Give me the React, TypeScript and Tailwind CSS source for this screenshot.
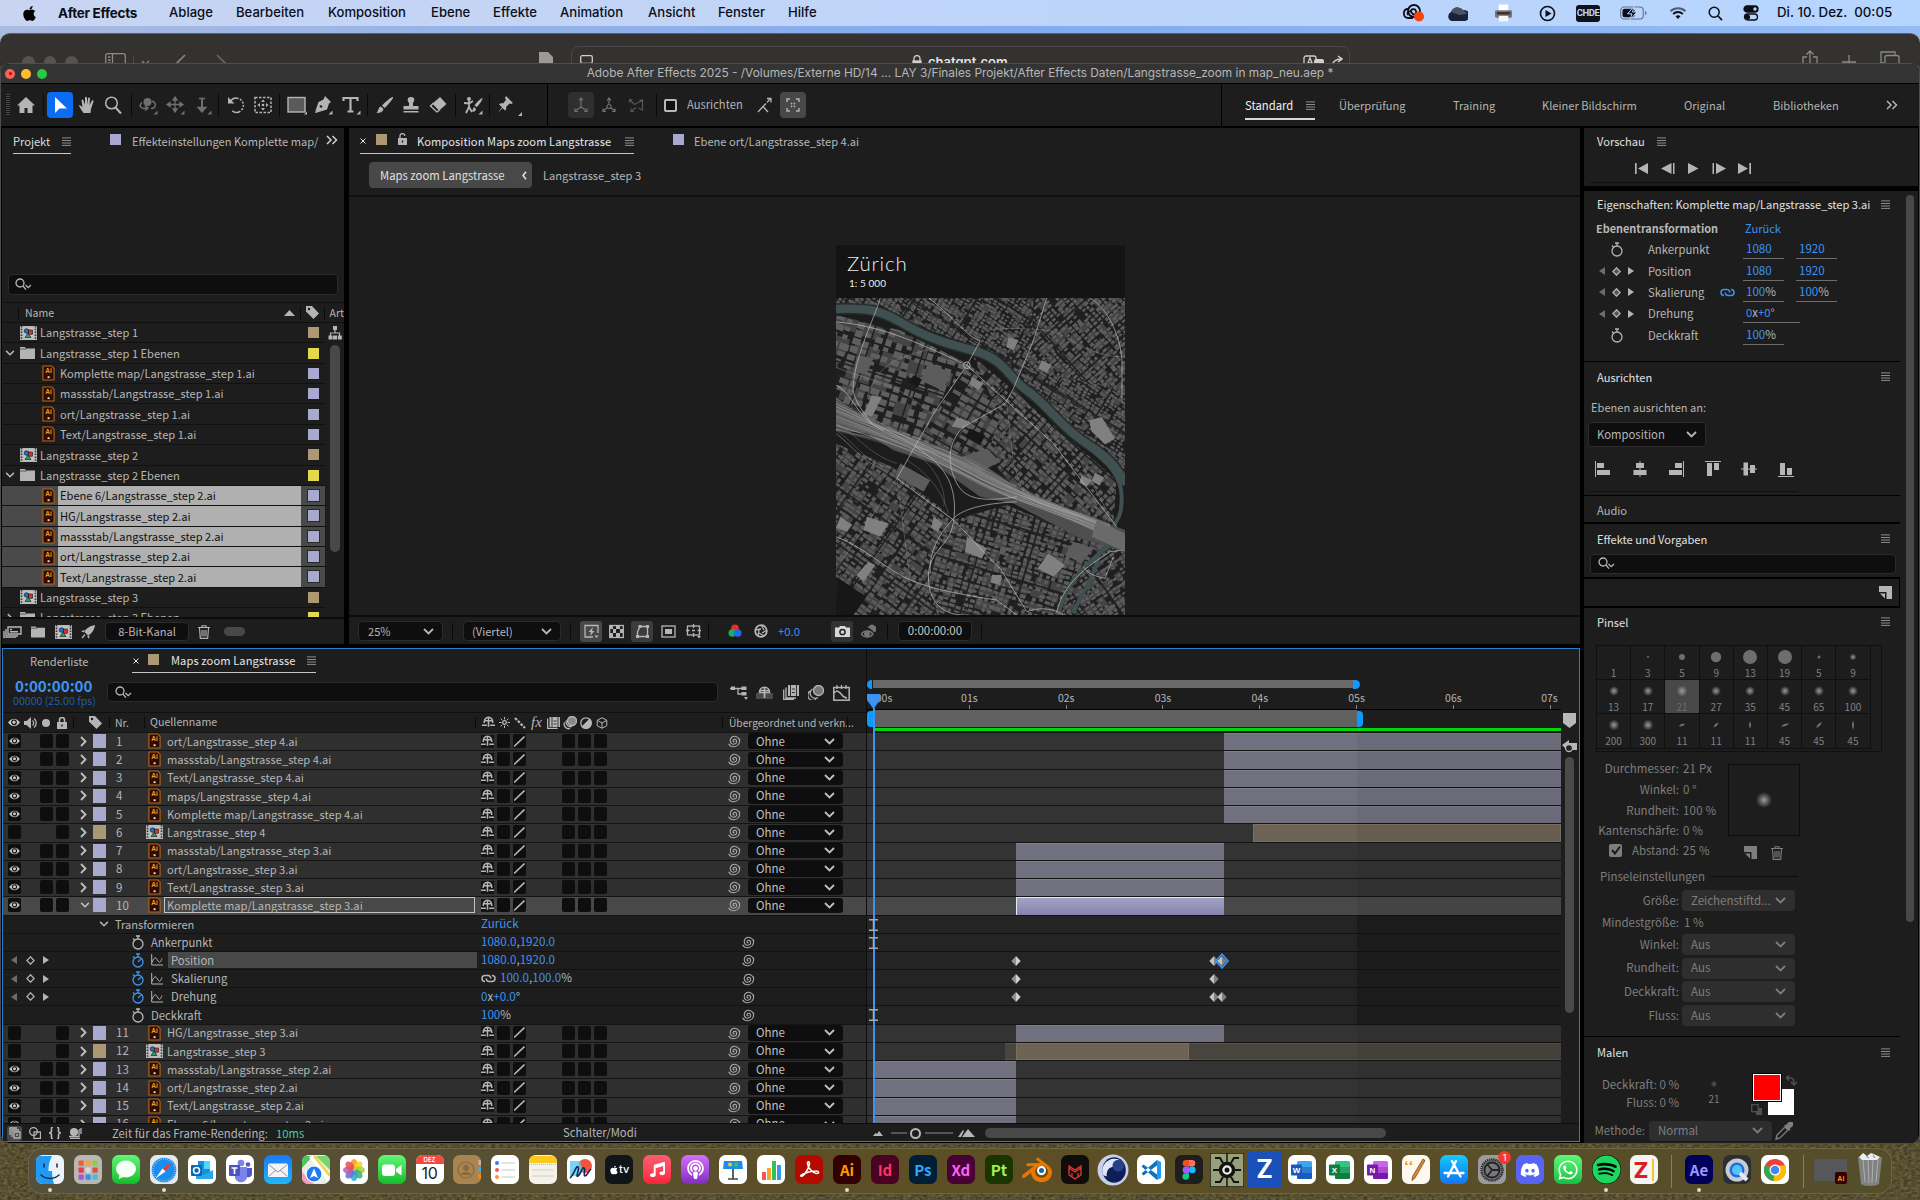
import type { ReactNode } from 'react';
import { FaApple, FaDiscord, FaMusic, FaPodcast, FaSpotify, FaWhatsapp } from 'react-icons/fa';
import { SiBlender } from 'react-icons/si';

interface IcoProps {
  children: ReactNode;
  className?: string;
  box?: string;
}

// Shared svg wrapper, everything is drawn with currentColor
const Ico = ({ children, className = 'size-4', box = '0 0 16 16' }: IcoProps) => (
  <svg viewBox={box} className={`shrink-0 ${className}`} fill="none" stroke="currentColor" strokeWidth="1.3">
    {children}
  </svg>
);

const Menu = ({ className = '' }: { className?: string }) => (
  <Ico className={`h-[9px] w-[9px] ${className}`} box="0 0 9 9">
    <path d="M0 .9h9M0 3.5h9M0 6h9M0 8.4h9" strokeWidth=".9" />
  </Ico>
);

const Chevron = ({ className = 'h-[7px] w-[11px]' }: { className?: string }) => (
  <Ico className={className} box="0 0 11 7">
    <path d="M1 1l4.5 4.5L10 1" strokeWidth="1.8" />
  </Ico>
);

const DoubleArrow = ({ className = '' }: { className?: string }) => (
  <Ico className={`h-[10px] w-[12px] ${className}`} box="0 0 12 10">
    <path d="M1 1l4 4-4 4M6.5 1l4 4-4 4" strokeWidth="1.5" />
  </Ico>
);

const SearchIcon = () => (
  <Ico className="h-[13px] w-[17px]" box="0 0 17 13">
    <circle cx="5" cy="5" r="4" />
    <path d="M8 8l3 3.6M10.500 7l2.700 2.700L16 7" />
  </Ico>
);

const Swatch = ({ className }: { className: string }) => <div className={`size-[11px] shrink-0 ${className}`} />;

const AiFile = () => (
  <svg viewBox="0 0 14 17" className="h-[16px] w-[13px] shrink-0">
    <path d="M1 1h9.500l2.500 2.500V16H1z" fill="#300b02" stroke="#b5651b" strokeWidth="1.200" />
    <text x="7" y="9" textAnchor="middle" className="font-['Liberation_Sans'] text-[7px] font-bold" fill="#ff9a1a">Ai</text>
    <rect x="6" y="12" width="2.200" height="2" fill="#ddd" />
  </svg>
);

const CompFile = () => (
  <svg viewBox="0 0 17 14" className="h-[14px] w-[17px] shrink-0">
    <rect width="17" height="14" fill="#b9b9b9" />
    <path d="M1.500 0v14M15.500 0v14" stroke="#333" strokeWidth="1.500" strokeDasharray="1.500 1.300" />
    <rect x="3.500" y="1.500" width="10" height="11" fill="#c4c4c4" />
    <circle cx="6.500" cy="5" r="2.300" fill="#1b6fd0" stroke="#111" strokeWidth=".6" />
    <rect x="8.500" y="4" width="4" height="4.200" fill="#d8322a" stroke="#111" strokeWidth=".6" />
    <path d="M8 7l3 4.500H5z" fill="#22a05a" stroke="#111" strokeWidth=".6" />
  </svg>
);

const Folder = ({ className = 'h-[12px] w-[15px]' }: { className?: string }) => (
  <svg viewBox="0 0 15 12" className={`shrink-0 ${className}`}>
    <path d="M0 0h5l1 1.500h9V12H0z" fill="#b4b4b4" />
    <path d="M0 2h6.500" stroke="#333" strokeWidth=".7" />
  </svg>
);

const Tag = ({ className = '' }: { className?: string }) => (
  <svg viewBox="0 0 13 13" className={`size-[13px] shrink-0 ${className}`}>
    <path d="M0 0h6l7 7.500L7.500 13 0 5.500z" fill="#b4b4b4" />
    <circle cx="3" cy="3" r="1.200" fill="#1d1d1d" />
  </svg>
);

const Trash = () => (
  <Ico className="h-[14px] w-[12px]" box="0 0 12 14">
    <path d="M0 2.500h12M4 2V.8h4V2M1.500 3l.8 10.400h7.400L10.500 3M4 5v6.500M6 5v6.500M8 5v6.500" strokeWidth="1.100" />
  </Ico>
);

const Stopwatch = ({ active = false }: { active?: boolean }) => (
  <Ico className={`h-[15px] w-[14px] ${active ? 'text-[#3b94f2]' : 'text-[#b4b4b4]'}`} box="0 0 14 15">
    <circle cx="7" cy="9" r="5" />
    <path d="M5 1h4M7 1v3M2 3.500l1.500 1.500" />
    {active && <path d="M7 9l3-3" />}
  </Ico>
);

const Whip = () => (
  <Ico className="size-[14px] text-[#a8a8a8]" box="0 0 14 14">
    <path d="M7.500 7.500c-.9.900-2-.2-1.300-1.400 1-1.600 3.500-.8 3.500 1.300 0 2.300-2.500 3.400-4.500 2.500C2.500 8.600 2.700 5 4.800 3.300 7.500 1.200 12 2.600 12.600 6.500M12.600 4.500v2.600c-.2 3-2.600 5.400-5.600 5.600-2.400.1-4.400-1-5.400-3" strokeWidth="1.100" />
  </Ico>
);

const Link = ({ className = '' }: { className?: string }) => (
  <Ico className={`h-[9px] w-[15px] ${className}`} box="0 0 15 9">
    <path d="M4 7.500a3 3 0 010-6h3a2.600 2.600 0 012.600 3.200M11 1.500a3 3 0 010 6H8a2.600 2.600 0 01-2.600-3.200" strokeWidth="1.500" />
  </Ico>
);

const KeyNav = ({ wide = false }: { wide?: boolean }) => (
  <div className={`flex items-center text-[#b4b4b4] ${wide ? 'gap-[8.500px]' : 'gap-[7px]'}`}>
    <Ico className="h-[8px] w-[6px] text-[#6c6c6c]" box="0 0 6 8"><path d="M6 0v8L0 4z" fill="currentColor" stroke="none" /></Ico>
    <Ico className="size-[9px]" box="0 0 9 9"><path d="M4.500.8l3.700 3.700-3.700 3.700L.8 4.500z" fill={wide ? 'none' : '#555'} /></Ico>
    <Ico className="h-[8px] w-[6px]" box="0 0 6 8"><path d="M0 0v8l6-4z" fill="currentColor" stroke="none" /></Ico>
  </div>
);

/* ---------- Menu bar ---------- */

const menus: [string, string][] = [
  ['Ablage', 'w-[67px]'],
  ['Bearbeiten', 'w-[92px]'],
  ['Komposition', 'w-[103px]'],
  ['Ebene', 'w-[62px]'],
  ['Effekte', 'w-[67px]'],
  ['Animation', 'w-[88px]'],
  ['Ansicht', 'w-[70px]'],
  ['Fenster', 'w-[70px]'],
  ['Hilfe', 'w-[40px]'],
];

const MenuBar = () => (
  <div className="flex h-[26px] items-center bg-linear-to-r from-[#c8d4f2] to-[#b5d5ff] font-['Inter',sans-serif] text-[13.100px] text-[#0b0e16]">
    <FaApple className="ml-[21px] size-[17px] text-black" />
    <span className="ml-[20px] w-[111px] shrink-0 text-[13.500px] font-bold tracking-[-0.300px]">After Effects</span>
    {menus.map(([label, width]) => (
      <span key={label} className={`${width} shrink-0 font-medium`}>{label}</span>
    ))}
    <div className="ml-auto flex items-center pr-[17px]">
      <div className="flex w-[44px] justify-center">
        <Ico className="h-[18px] w-[23px]" box="0 0 23 18">
          <circle cx="12" cy="7" r="6" strokeWidth="1.800" />
          <path d="M6 5C1 5 0 13 6 14h5M6 11c-2-3 2-5 4-2s5 1 4-2-6-2-5 1" strokeWidth="1.800" />
          <circle cx="17" cy="12.500" r="5" fill="#f4430d" stroke="none" />
        </Ico>
      </div>
      <div className="flex w-[44px] justify-center">
        <svg viewBox="0 0 22 15" className="h-[15px] w-[22px]">
          <path d="M5 15a5 5 0 010-9 7 7 0 0112-2 5.500 5.500 0 012 11z" fill="#18233a" />
          <path d="M7 3a7 7 0 0110 1 6 6 0 014 4l-8 1-8-3z" fill="#4a5263" />
        </svg>
      </div>
      <div className="flex w-[49px] justify-center">
        <svg viewBox="0 0 18 18" className="h-[18px] w-[17px]">
          <path d="M4 0h10v7H4z" fill="#fff" />
          <rect x="0" y="6" width="18" height="8" rx="1.500" fill="#7a736e" />
          <path d="M2 8h14v2.500H2z" fill="#35302d" />
          <path d="M4 12h10v6H4z" fill="#f5f5f5" />
        </svg>
      </div>
      <div className="flex w-[38px] justify-center">
        <Ico className="size-[17px]" box="0 0 17 17"><circle cx="8.500" cy="8.500" r="7" strokeWidth="1.600" /><path d="M6.500 5v7l6-3.500z" fill="currentColor" stroke="none" /></Ico>
      </div>
      <div className="ml-[10px] flex h-[17px] w-[24px] items-center justify-center rounded-[3px] bg-[#0d131c] font-['Roboto',sans-serif] text-[9.500px] font-bold tracking-tighter text-[#bcd8ff]">CHDE</div>
      <div className="ml-[20px] flex w-[28px]">
        <Ico className="h-[14px] w-[28px]" box="0 0 28 14">
          <rect x=".7" y="1" width="22.600" height="12" rx="3.500" strokeWidth="1.100" className="opacity-50" />
          <path d="M25 5v4c2-.5 2-3.500 0-4z" fill="currentColor" stroke="none" className="opacity-50" />
          <rect x="2.500" y="2.800" width="12" height="8.400" rx="2" fill="currentColor" stroke="none" />
          <path d="M14 .5L7.500 7.800H12L10 13.500 17 6h-4.500z" fill="currentColor" stroke="#b8d7fe" strokeWidth="1" />
        </Ico>
      </div>
      <Ico className="ml-[21px] h-[14px] w-[18px]" box="0 0 18 14">
        <path d="M1.500 5.200a11 11 0 0115 0" strokeWidth="2" className="opacity-60" />
        <path d="M4.200 8a7 7 0 019.600 0" strokeWidth="2" />
        <path d="M6.500 10.200a4 4 0 015 0L9 13z" fill="currentColor" stroke="none" />
      </Ico>
      <Ico className="ml-[21px] size-[15px]" box="0 0 15 15"><circle cx="6.200" cy="6.200" r="5" strokeWidth="1.500" /><path d="M10 10l4 4.200" strokeWidth="1.700" /></Ico>
      <Ico className="ml-[20px] h-[16px] w-[16px]" box="0 0 16 16">
        <rect x="1" y="1" width="14" height="6" rx="3" fill="currentColor" /><circle cx="12" cy="4" r="1.700" fill="#b8d7fe" stroke="none" />
        <rect x="1.500" y="9" width="13" height="6" rx="3" /><circle cx="4.500" cy="12" r="2.600" fill="currentColor" stroke="none" />
      </Ico>
      <span className="ml-[18px] w-[126px] text-[13.300px] font-medium whitespace-pre">Di. 10. Dez.  00:05</span>
    </div>
  </div>
);

/* ---------- Browser window that peeks out behind ---------- */

const BrowserStrip = () => (
  <div className="flex h-[33px] overflow-hidden rounded-t-[10px] border-t border-[#5e605f] bg-[#333230] text-[#8b8a88]">
    <div className="flex w-[571px] items-start pt-[22px]">
      <div className="ml-[22px] flex gap-[9px]">
        <div className="size-[12.500px] rounded-full bg-[#555452]" />
        <div className="size-[12.500px] rounded-full bg-[#555452]" />
        <div className="size-[12.500px] rounded-full bg-[#555452]" />
      </div>
      <Ico className="-mt-[3px] ml-[27px] h-[16px] w-[21px]" box="0 0 21 16"><rect x=".7" y=".7" width="19.600" height="14.600" rx="2" /><path d="M7.500 1v14M3 4h2.500M3 7h2.500M3 10h2.500" /></Ico>
      <div className="ml-[7px] h-3 w-px bg-[#4c4b49]" />
      <Ico className="mt-[4px] ml-[7px] h-[6px] w-[9px]" box="0 0 9 6"><path d="M1 1l3.500 3.500L8 1" /></Ico>
      <Ico className="-mt-[2px] ml-[26px] h-[18px] w-[11px]" box="0 0 11 18"><path d="M9 1L1 9l8 8" strokeWidth="1.600" /></Ico>
      <Ico className="-mt-[2px] ml-[28px] h-[18px] w-[11px] opacity-60" box="0 0 11 18"><path d="M2 1l8 8-8 8" strokeWidth="1.600" /></Ico>
      <Ico className="-mt-[4px] ml-[312px] h-[16px] w-[16px]" box="0 0 16 16"><path d="M1 0h9l5 5v11H1z" fill="#9b9a98" stroke="none" /></Ico>
    </div>
    <div className="mt-[12px] flex h-[30px] w-[779px] items-start rounded-[8px] border border-[#4a4947] pt-[8px] text-[#d0cfcd]">
      <Ico className="ml-[8px] h-[12px] w-[13px]" box="0 0 13 12"><rect x=".7" y=".7" width="11.600" height="7.600" rx="1.500" /></Ico>
      <Ico className="ml-[319px] h-[12px] w-[10px]" box="0 0 10 12"><path d="M2 6V3.500a3 3 0 016 0V6" /><rect x="1" y="6" width="8" height="6" fill="currentColor" /></Ico>
      <span className="ml-[6px] w-[90px] font-['Inter',sans-serif] text-[13px] leading-[15px] font-semibold text-[#e4e3e1]">chatgpt.com</span>
      <Ico className="ml-[285px] h-[12px] w-[22px]" box="0 0 22 12"><rect x="1" y="1" width="12" height="11" rx="2" /><path d="M4 10l3-7 3 7M5 8h4" /><rect x="11" y="4" width="10" height="8" rx="2" fill="currentColor" stroke="none" /></Ico>
      <Ico className="ml-[6px] h-[12px] w-[12px]" box="0 0 12 12"><path d="M1 11c1-5 4-7 9-7M7 1l4 3-4 3" strokeWidth="1.500" /></Ico>
    </div>
    <div className="ml-auto flex items-start pr-[19px]">
      <Ico className="mt-[16px] h-[18px] w-[18px]" box="0 0 18 18"><path d="M6 7H2v11h14V7h-4M9 14V1M5.500 4.500L9 1l3.500 3.500" /></Ico>
      <Ico className="mt-[20px] ml-[22px] h-[16px] w-[16px]"><path d="M8 1v14M1 8h14" /></Ico>
      <Ico className="mt-[17px] ml-[23px] h-[18px] w-[21px]" box="0 0 21 18"><path d="M4 12H1V1h14v3" /><rect x="5" y="4.500" width="14" height="13" rx="2" /></Ico>
    </div>
  </div>
);

/* ---------- Tool bar ---------- */

const Corner = () => <path d="M18.500 18.500h-4l4-4z" fill="currentColor" stroke="none" />;

const Tool = ({ children, className = '' }: { children: ReactNode; className?: string }) => (
  <div className={`flex h-[26px] w-[26px] shrink-0 items-center justify-center rounded-[4px] ${className}`}>
    <Ico className="size-[20px]" box="-1 -1 20 20">{children}</Ico>
  </div>
);

const Sep = ({ className = 'h-[22px]' }: { className?: string }) => <div className={`w-px shrink-0 bg-[#0a0a0a] ${className}`} />;

const ToolBar = () => (
  <div className="flex h-[43px] shrink-0 items-center border-t border-black bg-[#1d1d1d] text-[#b4b4b4]">
    <div className="ml-[5px] h-[22px] w-[4px] shrink-0 bg-[repeating-linear-gradient(#4a4a4a_0_1px,#161616_1px_2px)]" />
    <Tool className="ml-[3px]"><path d="M9 1L0 9.500h2.500V17h5v-5h3v5h5V9.500H18z" fill="currentColor" stroke="none" /></Tool>
    <Sep className="ml-[4px] h-[22px]" />
    <Tool className="ml-[3px] bg-[#0a6cf1] text-white"><path d="M4 1v16l4.500-4.500H16z" fill="currentColor" stroke="none" /></Tool>
    <Tool className="ml-px">
      <path d="M5.500 17c-1-2-3.500-4.500-4.500-7.500.8-.8 2 0 3.500 2L3.500 4c.8-1 1.700-.6 2 .5L7 9V1.500c.7-1 1.700-.8 2 .3V8.500l1.200-6.500c.8-.8 1.800-.5 1.800.7L11.500 9l2.500-4.500c.9-.6 1.800 0 1.500 1L13 13l-.5 4z" fill="currentColor" stroke="none" />
    </Tool>
    <Tool><circle cx="7.500" cy="7" r="5.800" strokeWidth="1.500" /><path d="M11.500 11.500L17 17.500" strokeWidth="2" /></Tool>
    <Sep className="ml-[5px] h-[22px]" />
    <Tool className="ml-[3px] text-[#6f6f6f]"><path d="M3 6.500C-1 10 2 13.500 8 12M13 5c5 2 4 7-1 7.500M6 10l3 2-3 2.500" strokeWidth="1.500" /><circle cx="8.500" cy="6" r="4" fill="currentColor" stroke="none" /><Corner /></Tool>
    <Tool className="ml-px text-[#6f6f6f]"><path d="M9 2v13M2 8.500h14M9 1L7 4h4zM9 16l-2-3h4zM1 8.500l3-2v4zM17 8.500l-3-2v4z" fill="currentColor" /><Corner /></Tool>
    <Tool className="ml-px text-[#6f6f6f]"><path d="M9 3v11" strokeWidth="2" /><path d="M6 2.500h6M9 16l-4-4.500h8z" fill="currentColor" /><Corner /></Tool>
    <Sep className="ml-[3px] h-[22px]" />
    <Tool className="ml-[4px]"><path d="M3.500 5C6 1.500 11 1 14 4s3.500 7 0 10.500-8 2-9.500-.5" strokeWidth="1.500" strokeDasharray="9 1.500 2 1.500 2 1.500 2 1.500 2 1.500" /><path d="M1 1v6.500h6.500z" fill="currentColor" stroke="none" /></Tool>
    <Tool className="ml-px"><rect x="1" y="1.500" width="16" height="15" strokeDasharray="2.500 1.500" strokeWidth="1.500" /><path d="M9 3.500L7 6h4zM9 14.500L7 12h4zM3.500 9L6 7v4zM14.500 9L12 7v4z" fill="currentColor" stroke="none" /><circle cx="9" cy="9" r="1.300" fill="currentColor" stroke="none" /></Tool>
    <Sep className="ml-[3px] h-[22px]" />
    <Tool className="ml-[4px]"><rect x="0" y="1.500" width="17" height="14.500" fill="#5a5a5a" strokeWidth="1.400" /><path d="M19 18.500h-3l3-3z" fill="currentColor" stroke="none" /></Tool>
    <Tool><path d="M11 0l6 6-2 1.500-2 6L1.500 17l-.5-.5 5-5.500 1.500 1 1-1.500-1.500-1.500-1.500 1 .5 1.500L1 16 4.500 6 9.500 3.500z" fill="currentColor" stroke="none" /><Corner /></Tool>
    <Tool className="ml-[2px]"><path d="M1.500 5V2h14v3M8.500 2v13.500M5.500 15.500h6" strokeWidth="2.200" /><Corner /></Tool>
    <Sep className="ml-[3px] h-[22px]" />
    <Tool className="ml-[4px]"><path d="M17 1c1 1-6 9.500-8.500 11L6 9.500C8 7 16 0 17 1zM5 10.500l2.500 2.500c-.5 3-3.500 4-7 4 2-1.500 1.500-6 4.500-6.500z" fill="currentColor" stroke="none" /></Tool>
    <Tool><path d="M9 1c4 0 4 3.500 2 6v3h5.500v3.500h-15V10H7V7C5 4.500 5 1 9 1zM1.500 15h15v1.600h-15z" fill="currentColor" stroke="none" /></Tool>
    <Tool className="ml-px"><path d="M11 1l6.500 7-9.500 8.500L.8 10z" fill="currentColor" stroke="none" /><path d="M4 7.500l6.500 6.500-2.500 2L1.500 10z" fill="#1d1d1d" stroke="currentColor" /></Tool>
    <Sep className="ml-[4px] h-[22px]" />
    <Tool className="ml-[4px]"><circle cx="5" cy="3" r="2" fill="currentColor" stroke="none" /><path d="M5 5v6L2 17M5 11l3 5M0 7l5 .5L9 5" strokeWidth="1.800" /><path d="M18.500 2c0 2-4 8-6 9l-2-1.500C12 7 17 2 18.500 2zM10 11l2 2c0 2-2 3-4 2.500 1-1 .5-3 2-4.500z" fill="currentColor" stroke="none" /><Corner /></Tool>
    <Sep className="ml-[3px] h-[22px]" />
    <Tool className="ml-[2px]"><path d="M10 0l7 7-2 1-1.500-.5L10 11c.5 2 0 3-1 3.500L6.500 12 2 17 6 11 3 8.500C4 7.500 5.500 7 7 7.500L10 4 9 2z" fill="currentColor" stroke="none" /></Tool>
    <svg viewBox="0 0 4 4" className="mt-[17px] size-[4px] shrink-0"><path d="M4 4H0l4-4z" fill="#b4b4b4" /></svg>
    <div className="ml-[25px] h-full w-px shrink-0 bg-black" />
    <Tool className="ml-[20px] bg-[#2f2f2f] text-[#707070]"><path d="M9 3v8M9 11l-6 4M9 11l6 4M7 4.500L9 2l2 2.500M3 12.500V15.500h3M15 12.500V15.500h-3" strokeWidth="1.200" /></Tool>
    <Tool className="ml-[2px] text-[#707070]"><path d="M9 2v6M7 12l-4 3M11 12l4 3M7 4.500L9 2l2 2.500M3 12.500V15.500h3M15 12.500V15.500h-3" strokeWidth="1.200" /><circle cx="9" cy="10.500" r="2" strokeWidth="1.200" /></Tool>
    <Tool className="ml-px text-[#555]"><path d="M2.500 3.500l5 5M7.500 8.500L15.500 4v10l-4-2M4 15.500l5-4M2.500 6.500v-3h3M4 12.500v3h3M15.500 7V4h-3" strokeWidth="1.200" /></Tool>
    <Sep className="ml-[7px] h-[22px]" />
    <div className="ml-[7px] size-[13px] shrink-0 rounded-[2px] border-2 border-[#b8b8b8] bg-[#111]" />
    <span className="ml-[10px] w-[57px] shrink-0 pb-px text-[11.200px]">Ausrichten</span>
    <Tool className="ml-[7px]"><path d="M3 16l5-5.500 5 5.500M8 10.500l3-3M12 6.500L15 3M12 2.500h4v4" strokeWidth="1.300" /></Tool>
    <Tool className="ml-[3px] bg-[#484848]"><path d="M3 6V3h3M12 3h3v3M15 12v3h-3M6 15H3v-3M7 7l1.200 1.200M11 7L9.800 8.200M7 11l1.200-1.200M11 11L9.800 9.800" strokeWidth="1.400" /></Tool>
    <div className="ml-auto flex h-full w-[698px] shrink-0 items-center border-l border-black text-[11.100px]">
      <div className="mt-[4px] ml-[23px] flex h-[25px] w-[70px] shrink-0 items-center justify-between border-b-2 border-[#d8d8d8] pb-[2px] text-[11.300px] text-[#f0f0f0]">
        Standard <Menu className="text-[#9a9a9a]" />
      </div>
      <div className="mt-px flex items-center">
        <span className="ml-[24px] w-[114px]">Überprüfung</span>
        <span className="w-[89px]">Training</span>
        <span className="w-[142px]">Kleiner Bildschirm</span>
        <span className="w-[89px]">Original</span>
        <span className="w-[113px]">Bibliotheken</span>
      </div>
      <DoubleArrow className="mb-px" />
    </div>
  </div>
);

/* ---------- Project panel ---------- */

interface ProjectItem {
  name: string;
  kind: 'comp' | 'folder' | 'ai';
  selected?: boolean;
  closed?: boolean;
}

const projectItems: ProjectItem[] = [
  { name: 'Langstrasse_step 1', kind: 'comp' },
  { name: 'Langstrasse_step 1 Ebenen', kind: 'folder' },
  { name: 'Komplette map/Langstrasse_step 1.ai', kind: 'ai' },
  { name: 'massstab/Langstrasse_step 1.ai', kind: 'ai' },
  { name: 'ort/Langstrasse_step 1.ai', kind: 'ai' },
  { name: 'Text/Langstrasse_step 1.ai', kind: 'ai' },
  { name: 'Langstrasse_step 2', kind: 'comp' },
  { name: 'Langstrasse_step 2 Ebenen', kind: 'folder' },
  { name: 'Ebene 6/Langstrasse_step 2.ai', kind: 'ai', selected: true },
  { name: 'HG/Langstrasse_step 2.ai', kind: 'ai', selected: true },
  { name: 'massstab/Langstrasse_step 2.ai', kind: 'ai', selected: true },
  { name: 'ort/Langstrasse_step 2.ai', kind: 'ai', selected: true },
  { name: 'Text/Langstrasse_step 2.ai', kind: 'ai', selected: true },
  { name: 'Langstrasse_step 3', kind: 'comp' },
  { name: 'Langstrasse_step 3 Ebenen', kind: 'folder', closed: true },
];

const kindColor = { comp: 'bg-[#ac9873]', folder: 'bg-[#e4d84c]', ai: 'bg-[#a9a8cf]' };

const ProjectRow = ({ item }: { item: ProjectItem }) => (
  <div className={`flex h-[20.360px] w-[323px] shrink-0 items-center border-b border-[#111] ${item.selected ? 'bg-[#4a4a4a]' : ''}`}>
    {item.kind === 'ai' ? (
      <div className="flex w-[56px] justify-end pr-[3px]"><AiFile /></div>
    ) : (
      <div className="flex w-[36px] items-center">
        <div className="flex w-[18px] justify-center pr-[3px]">
          {item.kind === 'folder' && <Chevron className={item.closed ? 'h-[6px] w-[10px] -rotate-90' : 'h-[6px] w-[10px]'} />}
        </div>
        {item.kind === 'folder' ? <Folder /> : <CompFile />}
      </div>
    )}
    <div className={`flex h-full items-center pl-[2px] ${item.kind === 'ai' ? 'w-[243px]' : 'w-[263px]'} ${item.selected ? 'bg-[#b0b0b0] text-[#111]' : ''}`}>
      {item.name}
    </div>
    <Swatch className={`ml-[7px] ${kindColor[item.kind]} ${item.selected ? 'outline outline-[#2a2a2a]' : ''}`} />
  </div>
);

const ProjectPanel = () => (
  <div className="flex w-[342px] flex-col overflow-hidden bg-[#1d1d1d]">
    <div className="flex h-[26px] shrink-0 items-end pl-[11px]">
      <div className="flex h-[24px] w-[58px] shrink-0 items-center justify-between border-b-[1.500px] border-[#c8c8c8] pb-[1px] text-[#dcdcdc]">
        Projekt <Menu className="text-[#9a9a9a]" />
      </div>
      <Swatch className="mb-[9px] ml-[39px] bg-[#a9a8cf]" />
      <div className="ml-[11px] flex h-[24px] w-[187px] shrink-0 items-center overflow-hidden pb-[1px] whitespace-nowrap">Effekteinstellungen Komplette map/</div>
      <DoubleArrow className="mb-[9px] ml-[7px] text-[#d0d0d0]" />
    </div>
    <div className="mt-[120px] ml-[6px] flex h-[21px] w-[330px] shrink-0 items-center rounded-[4px] border border-[#2b2b2b] bg-[#0e0e0e] pl-[6px]"><SearchIcon /></div>
    <div className="mt-[7px] flex h-[21px] shrink-0 items-center border-y border-[#101010] text-[10.500px]">
      <Sep className="ml-[16px] h-3" />
      <span className="ml-[6px] w-[260px]">Name</span>
      <svg viewBox="0 0 13 7" className="h-[6px] w-[13px] shrink-0"><path d="M6.500 0L13 7H0z" fill="#b4b4b4" /></svg>
      <Sep className="ml-[4px] h-3" />
      <Tag className="ml-[5px]" />
      <Sep className="ml-[5px] h-3" />
      <span className="ml-[5px]">Art</span>
    </div>
    <div className="flex h-[294px] shrink-0 overflow-hidden">
      <div className="flex w-[323px] shrink-0 flex-col">
        {projectItems.map((item) => <ProjectRow key={item.name} item={item} />)}
      </div>
      <div className="flex w-[19px] flex-col items-center pt-[3px]">
        <Ico className="h-[14px] w-[14px]" box="0 0 14 14"><path d="M7 4v3M2.500 10V7h9v3" strokeWidth="1.200" /><path d="M5 0h4v4H5zM.5 9.500h4v4h-4zM5 9.500h4v4H5zM9.800 9.500h4v4h-4z" fill="currentColor" stroke="none" /></Ico>
        <div className="mt-[5px] h-[207px] w-[10px] shrink-0 rounded-full bg-[#484848]" />
      </div>
    </div>
    <div className="flex flex-1 items-center border-t-2 border-[#0c0c0c]">
      <Ico className="ml-px h-[12px] w-[19px]" box="0 0 19 12"><path d="M5 1h13v7H5zM3 3v7h12M1 5v7h12M7 3.500h2M7 5.800h8" strokeWidth="1.400" /></Ico>
      <Folder className="ml-[9px] h-[12px] w-[14px]" />
      <div className="ml-[10px]"><CompFile /></div>
      <Ico className="ml-[9px] size-[14px]" box="0 0 14 14"><path d="M14 0C9 1 4 4 3.500 7L7 10.500C11 9 13.500 4 14 0zM4 5L0 6l2.500 1.500zM8.500 10.500L8 14l-2-3z" fill="currentColor" stroke="none" /><path d="M4 9.500l-3 3.500" /></Ico>
      <div className="ml-[10px] flex h-[19px] w-[84px] items-center justify-center rounded-[4px] border border-[#2b2b2b] bg-[#0e0e0e] pb-px">8-Bit-Kanal</div>
      <div className="ml-[9px]"><Trash /></div>
      <div className="ml-[14px] h-[9px] w-[21px] rounded-full bg-[#484848]" />
    </div>
  </div>
);

/* ---------- Map ---------- */

// Small deterministic generator so the city looks the same on every render
const makeRandom = (seed: number) => () => {
  seed = (seed * 16807) % 2147483647;
  return seed / 2147483647;
};

interface District {
  id: string;
  points: string;
  angle: number;
  cell: number;
  fill: string;
}

const districts: District[] = [
  { id: 'north', points: '107,203 975,203 975,750 660,450 510,345 300,265 107,230', angle: 32, cell: 11, fill: '#5c5c5c' },
  { id: 'north-east', points: '700,203 975,203 975,480 690,420', angle: -42, cell: 13, fill: '#5c5c5c' },
  { id: 'west', points: '107,255 300,300 500,400 350,650 107,520', angle: 18, cell: 25, fill: '#5f5f5f' },
  { id: 'center', points: '500,400 640,500 600,700 420,660 350,640', angle: 30, cell: 22, fill: '#5c5c5c' },
  { id: 'east', points: '520,380 640,480 950,750 940,880 680,810 560,680 600,560', angle: 42, cell: 15, fill: '#5c5c5c' },
  { id: 'south-west', points: '107,640 300,720 460,870 390,1000 420,1155 107,1155', angle: 35, cell: 15, fill: '#5a5a5a' },
  { id: 'south', points: '460,870 620,825 900,940 780,1155 410,1155 390,1000', angle: 17, cell: 15, fill: '#5c5c5c' },
  { id: 'south-east', points: '900,940 975,960 975,1155 780,1155', angle: -35, cell: 13, fill: '#5c5c5c' },
];

const blockPath = (cell: number, seed: number) => {
  const next = makeRandom(seed);
  let d = '';
  for (let y = -800; y < 800; y += cell) {
    for (let x = -800; x < 800; x += cell * 1.3) {
      const w = cell * (0.6 + next() * 0.6);
      const h = cell * (0.45 + next() * 0.4);
      if (next() > 0.1) d += `M${(x + next() * 3).toFixed(1)} ${(y + next() * 3).toFixed(1)}h${w.toFixed(1)}v${h.toFixed(1)}h${(-w).toFixed(1)}z`;
    }
  }
  return d;
};

const districtPaths = districts.map((district, i) => ({
  ...district,
  d: blockPath(district.cell, 97 + i * 31),
  yards: blockPath(district.cell * 2.6, 411 + i * 17),
}));

const rnd = makeRandom(5);
const tracks = Array.from({ length: 40 }, () => {
  const a = rnd();
  const b = rnd();
  return `M107 ${(505 + a * 100).toFixed(0)}C250 ${(580 + a * 60).toFixed(0)} 400 ${(625 + b * 70).toFixed(0)} 520 ${(690 + b * 70).toFixed(0)}S760 ${(820 + a * 25).toFixed(0)} 930 ${(880 + a * 45).toFixed(0)}`;
});

const lightBlocks = [
  '500,920 560,955 545,985 495,965', '200,860 265,880 240,920 190,900', '205,995 225,1005 190,1055 168,1035',
  '867,570 905,560 945,625 915,642 875,605', '625,320 655,330 640,360 618,350', '725,390 755,405 740,428 715,415',
  '745,970 795,1005 760,1040 712,1015', '515,440 550,460 535,480 508,462', '215,495 245,500 215,560 190,550',
  '470,560 510,575 490,595 455,590', '845,735 875,750 860,770 838,758', '885,728 912,742 898,766 875,752',
  '575,1035 605,1035 600,1065 572,1058', '400,860 428,880 412,905 393,893', '120,860 155,885 140,905 107,893',
];

const roads = [
  'M240 203C225 260 160 380 158 480C165 520 200 560 215 580',
  'M107 275C250 285 380 350 500 405L760 640L950 890',
  'M385 203C450 250 500 320 540 332L500 405L400 550L290 745L460 870',
  'M740 203L700 330L640 475L615 520L490 590C440 640 440 700 470 760S580 810 650 800',
  'M870 203C930 240 965 330 966 400V520',
  'M107 465C160 490 170 570 250 600',
  'M345 650C430 700 470 760 462 860S380 950 385 1050S470 1155 490 1155',
  'M650 815C540 820 480 840 455 870S385 950 390 1030',
  'M107 920C190 950 260 1020 330 1050S520 1100 590 1110L650 1155',
  'M460 870C520 930 560 980 600 1015L680 1145C720 1130 760 1135 790 1155',
  'M770 1145C790 1060 860 1010 930 965L970 960',
  'M850 1010C870 1040 900 1040 915 1045L940 980',
];

const lanes = [
  'M560 300C620 290 680 295 740 300S850 380 975 380',
  'M107 410C180 445 280 450 380 540L400 552',
  'M200 500C230 420 260 390 370 362L400 350',
  'M640 475L840 690L930 860',
  'M290 745L330 1050M290 745L107 1020M620 520L640 700L670 790',
];

const CityMap = () => (
  <svg viewBox="107 203 868 952" preserveAspectRatio="none" className="h-[317px] w-full shrink-0">
    <defs>
      {districts.map((district) => (
        <clipPath key={district.id} id={district.id}><polygon points={district.points} /></clipPath>
      ))}
    </defs>
    <rect x="107" y="203" width="868" height="952" fill="#1c1c1c" />
    {districtPaths.map((district) => (
      <g key={district.id} clipPath={`url(#${district.id})`}>
        <polygon points={district.points} fill="#1f1f1f" />
        <g transform={`translate(540 680) rotate(${district.angle})`}>
          <path d={district.yards} fill="#444" />
          <path d={district.d} fill={district.fill} />
          <path d="M-800 -560H800M-800 -430H800M-800 -290H800M-800 -140H800M-800 20H800M-800 170H800M-800 320H800M-800 460H800M-420 -800V800M-260 -800V800M-90 -800V800M80 -800V800M230 -800V800M390 -800V800" stroke="#222" strokeWidth="5" />
        </g>
      </g>
    ))}
    <path d="M107 500C200 580 340 620 440 660L560 710L660 780L820 840L975 900V965L840 925L640 820L540 800L400 700L280 660L200 610L107 600z" fill="#4e4e4e" />
    <path d="M107 610C150 640 180 690 250 720" stroke="#8a8a8a" strokeWidth="2" fill="none" />
    {lightBlocks.map((points) => <polygon key={points} points={points} fill="#808080" />)}
    <path d="M385 395l70 35-30 50-65-30zM170 375l50 8-22 50-40-8zM300 700l90 50-20 35-85-50zM485 680l75-25 40 40-60 30zM820 935l60 20-35 45-50-25z" fill="#5c5c5c" />
    <path d="M510 595l45 20-15 30-45-25zM340 435l25 12-12 24-28-14zM108 1040l90 60-40 55H107z" fill="#171717" />
    {tracks.map((d, i) => <path key={i} d={d} stroke={i % 3 ? '#949494' : '#c8c8c8'} strokeWidth="1.200" fill="none" opacity=".65" />)}
    <path d="M107 600C170 640 190 700 280 715M107 580C180 620 200 670 290 700M330 660C420 710 440 800 430 830M320 690C400 740 430 800 445 850" stroke="#999" strokeWidth="1.500" fill="none" opacity=".7" />
    <path d="M107 236C200 232 240 240 300 275S400 330 510 358S620 440 680 480S780 590 860 640S950 720 980 760" stroke="#262b2b" strokeWidth="34" fill="none" />
    <path d="M107 236C200 232 240 240 300 275S400 330 510 358S620 440 680 480S780 590 860 640S950 720 980 760" stroke="#405050" strokeWidth="25" fill="none" />
    <path d="M850 640C930 700 965 740 965 800S955 860 940 890M930 945C870 990 800 1050 775 1150M900 960C880 1060 830 1110 820 1150" stroke="#405050" strokeWidth="12" fill="none" />
    {lanes.map((d) => <path key={d} d={d} stroke="#8a8a8a" strokeWidth="2" fill="none" opacity=".7" />)}
    {roads.map((d) => <path key={d} d={d} stroke="#bdbdbd" strokeWidth="2.600" fill="none" opacity=".8" />)}
    <path d="M890 870l85 40v55l-100-45z" fill="#6a6a6a" />
    <circle cx="500" cy="405" r="10" stroke="#aaa" strokeWidth="3" fill="none" />
  </svg>
);

/* ---------- Composition panel ---------- */

const Dropdown = ({ children, className }: { children: ReactNode; className: string }) => (
  <div className={`flex shrink-0 items-center justify-between rounded-[4px] border border-[#2b2b2b] bg-[#0e0e0e] ${className}`}>
    {children}
    <Chevron />
  </div>
);

const ViewButton = ({ children, className = '' }: { children: ReactNode; className?: string }) => (
  <div className={`flex h-[21px] w-[22px] shrink-0 items-center justify-center rounded-[3px] ${className}`}>
    <Ico className="size-[15px]" box="0 0 15 15">{children}</Ico>
  </div>
);

const CompositionPanel = () => (
  <div className="flex w-[1231px] flex-col bg-[#1d1d1d]">
    <div className="flex h-[26px] shrink-0 items-end pl-[11px]">
      <div className="flex h-[24px] w-[274px] items-center border-b-[1.500px] border-[#c8c8c8] pb-[1px] text-[#e6e6e6]">
        <Ico className="h-[6px] w-[6px]" box="0 0 6 6"><path d="M.5.5l5 5M5.500.5l-5 5" strokeWidth="1" /></Ico>
        <Swatch className="mb-[3px] ml-[10px] bg-[#ac9873]" />
        <Ico className="mb-[5px] ml-[11px] h-[12px] w-[9px] text-[#b4b4b4]" box="0 0 9 12"><path d="M2 6V3a2.400 2.400 0 014.800 0" /><path d="M0 5h9v7H0z" fill="currentColor" stroke="none" /><path d="M4.500 7.500v2" stroke="#111" /></Ico>
        <span className="ml-[10px] tracking-[0.080px]">Komposition Maps zoom Langstrasse</span>
        <Menu className="ml-auto text-[#9a9a9a]" />
      </div>
      <Swatch className="mb-[9px] ml-[39px] bg-[#a9a8cf]" />
      <div className="ml-[10px] flex h-[24px] items-center pb-[1px]">Ebene ort/Langstrasse_step 4.ai</div>
    </div>
    <div className="mt-px flex h-[42px] shrink-0 items-center border-b-2 border-[#101010]">
      <div className="ml-[20px] flex h-[26px] w-[163px] items-center justify-between rounded-[4px] bg-[#484848] pr-[5px] pl-[11px] text-[11.300px] text-[#e0e0e0]">
        Maps zoom Langstrasse
        <Ico className="h-[9px] w-[5px]" box="0 0 5 9"><path d="M4 .8L1 4.500l3 3.700" strokeWidth="1.500" /></Ico>
      </div>
      <span className="ml-[11px]">Langstrasse_step 3</span>
    </div>
    <div className="flex h-[418px] shrink-0 justify-center pt-[48px]">
      <div className="ml-[32px] flex w-[289px] flex-col overflow-hidden bg-[#141414]">
        <div className="flex h-[53px] shrink-0 flex-col pt-[7px] pl-[11px] text-[#ededed]">
          <span className="font-['Lato',sans-serif] text-[20.500px] leading-[22px] font-light tracking-[0.800px]">Zürich</span>
          <span className="pl-[2px] font-['Lato',sans-serif] text-[10px] leading-[19px] tracking-[0.050px]">1: 5 000</span>
        </div>
        <CityMap />
      </div>
    </div>
    <div className="flex flex-1 items-center border-t-2 border-[#0c0c0c] pt-px">
      <Dropdown className="ml-[9px] h-[20px] w-[85px] pr-[8px] pl-[9px]">25%</Dropdown>
      <Sep className="ml-[9px] h-4" />
      <Dropdown className="ml-[10px] h-[20px] w-[98px] pr-[8px] pl-[8px]">(Viertel)</Dropdown>
      <Sep className="ml-[9px] h-4" />
      <ViewButton className="ml-[9px] bg-[#484848]"><path d="M14 9V1.500H1V13h8" /><path d="M9 3L4.500 8H7l-1 4 4.500-5H8z" fill="currentColor" stroke="none" /><path d="M10.500 11.500h4l-2 2.500z" fill="currentColor" stroke="none" /></ViewButton>
      <ViewButton className="ml-[3px]"><rect x=".7" y="1.500" width="13.600" height="12" /><path d="M1 2h3v3H1zM7 2h4v3H7zM4 5h3v4H4zM11 5h3v4h-3zM1 9h3v4H1zM7 9h4v4H7z" fill="currentColor" stroke="none" /></ViewButton>
      <ViewButton className="ml-[4px] bg-[#3c3c3c]"><path d="M2.500 12.500V8L5 2.500h7.500v10z" /><path d="M1 11h3v3H1zM11 11h3v3h-3zM11 1h3v3h-3zM3.500 1h3v3h-3z" fill="currentColor" stroke="none" /></ViewButton>
      <ViewButton className="ml-[4px]"><rect x="1" y="2" width="13" height="11" /><rect x="4" y="5" width="7" height="5" fill="currentColor" stroke="none" /></ViewButton>
      <ViewButton className="ml-[3px]"><rect x="1.500" y="2" width="12" height="9" /><path d="M7.500 0v4M7.500 9v4M0 6.500h3.500M11.500 6.500H15M6 6.500h3" /><path d="M11 12h4l-2 2.500z" fill="currentColor" stroke="none" /></ViewButton>
      <Sep className="ml-[4px] h-4" />
      <svg viewBox="0 0 14 14" className="ml-[19px] size-[14px]"><circle cx="7" cy="4.300" r="3.800" fill="#e0322b" /><circle cx="4.300" cy="9" r="3.800" fill="#1fae55" /><circle cx="9.700" cy="9" r="3.800" fill="#2567e8" /></svg>
      <Ico className="ml-[12px] size-[14px]" box="0 0 14 14"><circle cx="7" cy="7" r="5.800" strokeWidth="1.800" /><path d="M7 1l3 5M13 6l-5 3M10 12l-5-3M4 12l1-6M1 6l6-1" /></Ico>
      <span className="ml-[10px] w-[46px] text-[11.300px] text-[#3b94f2]">+0.0</span>
      <ViewButton className="ml-[7px] bg-[#333] text-[#d8d8d8]"><path d="M0 3.500h4L5 2h5l1 1.500h4V13H0z" fill="currentColor" stroke="none" /><circle cx="7.500" cy="8" r="2.600" fill="#d8d8d8" stroke="#222" strokeWidth="1.500" /></ViewButton>
      <ViewButton className="ml-[4px] text-[#767676]"><path d="M0 10c3-4 9-4 12 0-3 4-9 4-12 0z" /><circle cx="6" cy="10" r="2.300" fill="currentColor" /><path d="M7 3h2l.5-1.500h3L13 3h2v4h-3" fill="currentColor" /></ViewButton>
      <Sep className="ml-[8px] h-4" />
      <div className="ml-[10px] flex h-[20px] w-[74px] items-center justify-center rounded-[4px] border border-[#2b2b2b] bg-[#0e0e0e] text-[11.500px] text-[#c8c8c8]">0:00:00:00</div>
      <Sep className="ml-[9px] h-4" />
    </div>
  </div>
);

/* ---------- Timeline ---------- */

interface Bar {
  from: number;
  to: number;
  tone: string;
}

interface Layer {
  nr: number;
  name: string;
  comp?: boolean;
  hidden?: boolean;
  selected?: boolean;
  bars: Bar[];
}

const violet = 'bg-[#70707f] border-t border-[#7f7f8d]';
const sand = 'bg-[#6c6354] border border-[#7b715f]';
const sandDim = 'bg-[#48453f] border-y border-[#57534a]';

// Bar positions are pixels from the start of the track area
const late: Bar[] = [{ from: 357, to: 694, tone: violet }];
const middle: Bar[] = [{ from: 149, to: 357, tone: violet }];
const early: Bar[] = [{ from: 6, to: 148.5, tone: violet }];

const layers: Layer[] = [
  { nr: 1, name: 'ort/Langstrasse_step 4.ai', bars: late },
  { nr: 2, name: 'massstab/Langstrasse_step 4.ai', bars: late },
  { nr: 3, name: 'Text/Langstrasse_step 4.ai', bars: late },
  { nr: 4, name: 'maps/Langstrasse_step 4.ai', bars: late },
  { nr: 5, name: 'Komplette map/Langstrasse_step 4.ai', bars: late },
  { nr: 6, name: 'Langstrasse_step 4', comp: true, hidden: true, bars: [{ from: 385.5, to: 694, tone: sand }] },
  { nr: 7, name: 'massstab/Langstrasse_step 3.ai', bars: middle },
  { nr: 8, name: 'ort/Langstrasse_step 3.ai', bars: middle },
  { nr: 9, name: 'Text/Langstrasse_step 3.ai', bars: middle },
  { nr: 10, name: 'Komplette map/Langstrasse_step 3.ai', selected: true, bars: [{ from: 149, to: 357, tone: 'bg-linear-to-b from-[#a3a2c4] to-[#8583ad] border-t border-l border-[#e8e8f4]' }] },
  { nr: 11, name: 'HG/Langstrasse_step 3.ai', hidden: true, bars: middle },
  { nr: 12, name: 'Langstrasse_step 3', comp: true, hidden: true, bars: [{ from: 138, to: 149, tone: sandDim }, { from: 149, to: 322, tone: sand }, { from: 322, to: 694, tone: sandDim }] },
  { nr: 13, name: 'massstab/Langstrasse_step 2.ai', bars: early },
  { nr: 14, name: 'ort/Langstrasse_step 2.ai', bars: early },
  { nr: 15, name: 'Text/Langstrasse_step 2.ai', bars: early },
  { nr: 16, name: 'Ebene 6/Langstrasse_step 2.ai', bars: early },
];

interface Property {
  name: string;
  value: ReactNode;
  group?: boolean;
  animated?: boolean;
  selected?: boolean;
  keys?: number[];
}

const Blue = ({ children }: { children: ReactNode }) => <span className="text-[#3b94f2]">{children}</span>;

const properties: Property[] = [
  { name: 'Transformieren', group: true, value: <Blue>Zurück</Blue> },
  { name: 'Ankerpunkt', value: <><Blue>1080.0</Blue>,<Blue>1920.0</Blue></> },
  { name: 'Position', animated: true, selected: true, keys: [149, 347, 354.5], value: <><Blue>1080.0</Blue>,<Blue>1920.0</Blue></> },
  { name: 'Skalierung', animated: true, keys: [149, 347], value: <><Blue>100.0</Blue>,<Blue>100.0</Blue>%</> },
  { name: 'Drehung', animated: true, keys: [149, 347, 354.5], value: <><Blue>0</Blue>x<Blue>+0.0</Blue>°</> },
  { name: 'Deckkraft', value: <><Blue>100</Blue>%</> },
];

const Eye = ({ className = 'h-[9px] w-[12px]' }: { className?: string }) => (
  <Ico className={className} box="0 0 12 9">
    <path d="M.5 4.500C3 .3 9 .3 11.500 4.500 9 8.700 3 8.700.5 4.500z" fill="#c8c8c8" stroke="#c8c8c8" strokeWidth=".8" />
    <circle cx="6" cy="4.300" r="2.300" fill="#c8c8c8" stroke="#0e0e0e" strokeWidth="1.200" />
  </Ico>
);

const Shy = ({ className = 'size-[13px]' }: { className?: string }) => (
  <Ico className={className} box="0 0 12 12"><path d="M2 6.500C1.500-.5 10.500-.5 10 6.500M2 4.300h8M6 1.500V10M0 8.500h4.500M7.500 8.500H12" strokeWidth="1.400" /></Ico>
);

const Square = ({ className = '', children }: { className?: string; children?: ReactNode }) => (
  <div className={`flex h-[14px] w-[13px] shrink-0 items-center justify-center rounded-[2px] bg-[#0e0e0e] ${className}`}>{children}</div>
);

const LayerRow = ({ layer }: { layer: Layer }) => (
  <div className={`flex h-[18.250px] shrink-0 items-center border-t border-[#141414] pb-px ${layer.selected ? 'bg-[#484848]' : 'bg-[#2f2f2f]'}`}>
    <Square className="ml-[4.500px]">{!layer.hidden && <Eye className="h-[8px] w-[11px]" />}</Square>
    <Square className={`ml-[19px] ${layer.hidden ? 'invisible' : ''}`} />
    <Square className="ml-[3px]" />
    <div className={`flex w-[14px] justify-center text-[#c0c0c0] ${layer.selected ? 'ml-[9.500px]' : 'ml-[7.500px]'}`}>
      <Chevron className={layer.selected ? 'h-[6px] w-[10px]' : 'h-[7px] w-[11px] -rotate-90'} />
    </div>
    <div className={`h-[14px] w-[13px] shrink-0 ${layer.selected ? 'ml-px' : 'ml-[3px]'} ${layer.comp ? 'bg-[#ac9873]' : 'bg-[#a9a8cf]'}`} />
    <span className="ml-[10px] w-[31px] shrink-0 text-[11.500px]">{layer.nr}</span>
    <div className="flex w-[15px] shrink-0 justify-center">{layer.comp ? <CompFile /> : <AiFile />}</div>
    <div className={`ml-[2px] flex h-[16px] w-[311px] shrink-0 items-center pl-[2px] text-[11.150px] ${layer.selected ? 'border border-[#c4c4c4]' : 'border border-transparent'}`}>{layer.name}</div>
    <div className="ml-[6px] flex w-[13px] bg-[#151515]"><Shy /></div>
    <Square className="ml-[3px]" />
    <Square className="ml-[3px]"><Ico className="size-[11px]" box="0 0 11 11"><path d="M0 10.500L10.500.5" strokeWidth="1.600" /></Ico></Square>
    <Square className="ml-[36px]" />
    <Square className="ml-[3px]" />
    <Square className="ml-[3px]" />
    <div className="ml-[120px]"><Whip /></div>
    <div className="ml-[7px] flex h-[15.500px] w-[95px] items-center justify-between rounded-[3px] bg-[#0e0e0e] pr-[8px] pl-[8px] text-[11.500px] text-[#c0c0c0]">
      Ohne <Chevron />
    </div>
  </div>
);

const PropertyRow = ({ property }: { property: Property }) => (
  <div className="flex h-[18.200px] shrink-0 items-center border-t border-[#121212] bg-[#1d1d1d]">
    <div className="flex w-[96px] shrink-0 pl-[8px]">{property.animated && <KeyNav wide />}</div>
    {property.group ? (
      <div className="flex w-[382px] shrink-0 items-center"><Chevron className="h-[6px] w-[10px]" /><span className="ml-[6px]">{property.name}</span></div>
    ) : (
      <div className="flex h-full w-[382px] shrink-0 items-center pl-[32px]">
        <Stopwatch active={property.animated} />
        {property.animated && <Ico className="ml-[6px] size-[12px]" box="0 0 12 12"><path d="M.7 0v11H12M1 8.500C4 1 5 4 7 7s3 0 4-2.500" strokeWidth="1" /></Ico>}
        <div className={`flex h-[16px] items-center pl-[3px] text-[11.300px] ${property.animated ? 'ml-[5px] w-[309px]' : 'ml-[3px]'} ${property.selected ? 'bg-[#484848]' : ''}`}>{property.name}</div>
      </div>
    )}
    <div className="flex w-[260px] shrink-0 items-center pb-px text-[11.600px]">
      {property.name === 'Skalierung' && <Link className="mt-px mr-[4px]" />}
      <span>{property.value}</span>
    </div>
    {!property.group && <Whip />}
  </div>
);

const Keyframe = ({ x, selected }: { x: number; selected?: boolean }) => (
  <svg viewBox="0 0 14 16" className="absolute top-[1px] h-[16px] w-[14px] -translate-x-1/2" style={{ left: x }}>
    <path d="M7 3v10L2.300 8z" fill={x === 149 ? '#929292' : '#c4c4c4'} />
    <path d="M7 3v10l4.700-5z" fill={x === 149 ? '#d0d0d0' : '#808080'} />
    {selected && <path d="M7 1.200l6 6.800-6 6.800L1 8z" fill="none" stroke="#3b94f2" strokeWidth="1.700" />}
  </svg>
);

const IBeam = () => (
  <svg viewBox="0 0 9 12" className="absolute top-[3px] left-[2px] z-10 h-[12px] w-[9px]"><path d="M0 .7h9M0 11.300h9M4.500 1v10" stroke="#a8a8a8" strokeWidth="1.500" /></svg>
);

const LayerTrack = ({ layer }: { layer: Layer }) => (
  <div className={`flex h-[18.250px] shrink-0 border-t border-[#141414] ${layer.selected ? 'bg-[#484848]' : 'bg-[#333]'}`}>
    {layer.bars.map((bar, i) => (
      <div
        key={bar.from}
        className={`h-full shrink-0 ${bar.tone}`}
        style={{ marginLeft: i === 0 ? bar.from : 0, width: bar.to - bar.from }}
      />
    ))}
  </div>
);

const seconds = ['01s', '02s', '03s', '04s', '05s', '06s'];

const Ruler = () => (
  <div className="flex h-[83px] w-[694px] shrink-0 flex-col overflow-hidden">
    <div className="mt-[30px] flex h-[10px] shrink-0 items-center">
      <div className="h-[9px] w-[5px] rounded-l-full bg-[#0d99ff]" />
      <div className="ml-px h-[8px] w-[480px] bg-[#696969]" />
      <div className="h-[9px] w-[7px] rounded-r-full bg-[#0d99ff]" />
    </div>
    <div className="flex h-[21px] shrink-0 border-b border-black pt-px text-[10.500px] leading-[15px]">
      <span className="w-[54px] shrink-0 text-[#b0b0b0]">1:00s</span>
      {seconds.map((label) => (
        <div key={label} className="flex w-[96.800px] shrink-0 flex-col items-center">
          <span>{label}</span>
          <div className="h-[6px] w-px bg-[#888]" />
        </div>
      ))}
      <div className="flex w-[59px] shrink-0 flex-col items-end pr-[3px]"><span>07s</span><div className="mr-[7px] h-[6px] w-px bg-[#888]" /></div>
    </div>
    <div className="flex h-[17px] shrink-0 items-center">
      <div className="h-[16px] w-[6px] rounded-l-[4px] bg-[#0d99ff]" />
      <div className="h-[17px] w-[484px] bg-[#616161]" />
      <div className="h-[16px] w-[6px] rounded-r-[4px] bg-[#0d99ff]" />
    </div>
    <div className="mt-px ml-[6px] h-[3px] shrink-0 bg-[#00d60a]" />
  </div>
);

const LayerHeader = () => (
  <div className="flex h-[20px] shrink-0 items-center border-t border-[#101010] text-[10.500px]">
    <Eye className="ml-[5px] h-[9px] w-[12px]" />
    <Ico className="ml-[4px] h-[12px] w-[13px]" box="0 0 13 12"><path d="M0 4h2.500L7 0v12L2.500 8H0z" fill="currentColor" stroke="none" /><path d="M8.500 3.500c1.500 1 1.500 4 0 5M10 1.500c3 2 3 7 0 9" /></Ico>
    <div className="ml-[5px] size-[8px] shrink-0 rounded-full bg-[#b4b4b4]" />
    <Ico className="ml-[7px] h-[12px] w-[10px]" box="0 0 10 12"><path d="M2.500 6V3a2.500 2.500 0 015 0v3" strokeWidth="1.600" /><path d="M0 5h10v7H0z" fill="currentColor" stroke="none" /><path d="M5 7.500v2" stroke="#111" /></Ico>
    <Sep className="ml-[6px] h-[11px]" />
    <Tag className="ml-[15px]" />
    <Sep className="ml-[7px] h-[11px]" />
    <span className="ml-[5px] w-[29px] shrink-0">Nr.</span>
    <Sep className="h-[11px]" />
    <span className="ml-[5px] w-[325px] shrink-0 text-[10.700px]">Quellenname</span>
    <Sep className="h-[11px]" />
    <div className="flex w-[246px] shrink-0 items-center">
      <Shy className="ml-[6px] size-[13px]" />
      <Ico className="ml-[4px] size-[11px]" box="0 0 11 11"><circle cx="5.500" cy="5.500" r="1.800" /><path d="M5.500 0v2.500M5.500 8.500V11M0 5.500h2.500M8.500 5.500H11M1.600 1.600l1.700 1.700M7.700 7.700l1.700 1.700M9.400 1.600L7.700 3.300M3.300 7.700L1.600 9.400" strokeWidth="1" /></Ico>
      <Ico className="ml-[4px] size-[12px]" box="0 0 12 12"><path d="M1 1l10 10" strokeWidth="2.200" strokeDasharray="2.800 1.200" /></Ico>
      <span className="ml-[5px] w-[13px] font-['Liberation_Serif',serif] text-[15px] leading-none italic">fx</span>
      <Ico className="ml-[3px] h-[12px] w-[13px]" box="0 0 13 12"><rect x="2.500" y="0" width="10.500" height="10" fill="currentColor" stroke="none" /><path d="M5 0v10M11 0v10M6.500 4h3M6.500 7h3" stroke="#1d1d1d" strokeWidth=".8" /><path d="M.6 1.500v10h10" /></Ico>
      <Ico className="ml-[3px] size-[14px]" box="0 0 14 14"><circle cx="9" cy="5" r="4.500" fill="#8a8a8a" /><path d="M3.500 4.500A4.500 4.500 0 009 10.500M1.500 6.500a4.500 4.500 0 005.500 6" /></Ico>
      <Ico className="ml-[3px] size-[12px]" box="0 0 12 12"><circle cx="6" cy="6" r="5.200" /><path d="M9.700 2.300A5.200 5.200 0 012.300 9.700z" fill="currentColor" /></Ico>
      <Ico className="ml-[4px] size-[12px]" box="0 0 12 12"><path d="M6 .7l4.800 2.600v5.400L6 11.300 1.200 8.700V3.300zM1.200 3.300L6 6l4.800-2.700M6 6v5" strokeWidth="1" /></Ico>
    </div>
    <Sep className="h-[11px]" />
    <span className="ml-[6px] w-[118px] shrink-0 text-[10.200px] whitespace-nowrap">Übergeordnet und verkn...</span>
    <Sep className="h-[11px]" />
  </div>
);

const TimelinePanel = () => (
  <div className="flex h-[494px] w-[1578px] flex-col border-[1.500px] border-[#2c7bd2] bg-[#1d1d1d]">
    <div className="flex h-[474px] shrink-0 overflow-hidden">
      <div className="flex w-[864px] shrink-0 flex-col overflow-hidden border-r border-[#0c0c0c]">
        <div className="flex h-[24px] shrink-0 items-end">
          <span className="ml-[27px] w-[102px] pb-[3px]">Renderliste</span>
          <div className="flex h-[23px] w-[184px] items-center border-b-[1.500px] border-[#c8c8c8] pb-px text-[#e6e6e6]">
            <Ico className="ml-px h-[6px] w-[6px]" box="0 0 6 6"><path d="M.5.5l5 5M5.500.5l-5 5" strokeWidth="1" /></Ico>
            <Swatch className="mb-[3px] ml-[9px] bg-[#ac9873]" />
            <span className="ml-[12px] tracking-[0.100px]">Maps zoom Langstrasse</span>
            <Menu className="ml-auto text-[#9a9a9a]" />
          </div>
        </div>
        <div className="flex h-[39px] shrink-0">
          <div className="flex w-[104px] shrink-0 flex-col pt-[4px] pl-[12px]">
            <span className="text-[15.200px] leading-[17px] font-bold text-[#3b94f2]">0:00:00:00</span>
            <span className="-ml-[2px] text-[10.600px] leading-[14px] whitespace-nowrap text-[#1c5eab]">00000 (25.00 fps)</span>
          </div>
          <div className="mt-[9px] flex h-[20px] w-[611px] shrink-0 items-center rounded-[4px] border border-[#2b2b2b] bg-[#0e0e0e] pl-[7px]"><SearchIcon /></div>
          <div className="mt-[12px] ml-[12px] flex items-start text-[#b4b4b4]">
            <Ico className="h-[15px] w-[18px]" box="0 0 18 15"><path d="M0 3.500h6M6 3.500h6M8 3.500V9h4" /><path d="M1 1.500h4v3.500H1zM11.500 1.500h5v3.500h-5zM11.500 7h5v3.500h-5zM14 12h4l-2 3z" fill="currentColor" stroke="none" /></Ico>
            <Ico className="ml-[8px] h-[14px] w-[17px]" box="0 0 17 14"><path d="M0 8h17v6H0z" fill="#4a4a4a" stroke="none" /><path d="M3.500 7.500c0-7 10-7 10 0zM8.500 2v11M3 5.500h11" strokeWidth="1.700" /></Ico>
            <Ico className="ml-[10px] h-[15px] w-[16px]" box="0 0 16 15"><rect x="5" y="0" width="11" height="11" fill="currentColor" stroke="none" /><path d="M3 2.500V13h10M.7 4.500V14.400H11" /><path d="M7.500 0v11M13.500 0v11M9 4h3M9 7.500h3" stroke="#333" strokeWidth="1" /></Ico>
            <Ico className="ml-[9px] h-[15px] w-[16px]" box="0 0 16 15"><circle cx="10.500" cy="5.500" r="5" fill="#777" /><path d="M4.500 4A5 5 0 0010 12.500M2 6a5 5 0 006 8.500" /></Ico>
            <Ico className="ml-[9px] h-[16px] w-[17px]" box="0 0 17 16"><rect x=".8" y="2.500" width="15.400" height="12.700" strokeWidth="1.500" /><path d="M4 0v4M8.500 0v4M13 0v4M0 7h3M3 6c6 0 5 7 11 7" /></Ico>
          </div>
        </div>
        <LayerHeader />
        {layers.slice(0, 10).map((layer) => <LayerRow key={layer.nr} layer={layer} />)}
        {properties.map((property) => <PropertyRow key={property.name} property={property} />)}
        {layers.slice(10).map((layer) => <LayerRow key={layer.nr} layer={layer} />)}
      </div>
      <div className="relative flex w-[694px] shrink-0 flex-col">
        <Ruler />
        <div className="flex flex-1 flex-col overflow-hidden">
          {layers.slice(0, 10).map((layer) => <LayerTrack key={layer.nr} layer={layer} />)}
          {properties.map((property) => (
            <div key={property.name} className="relative flex h-[18.200px] shrink-0 justify-end border-t border-[#121212] bg-[#242424]">
              <div className="h-full w-[204px] bg-[#1d1d1d]" />
              {property.keys
                ? property.keys.map((x) => <Keyframe key={x} x={x} selected={property.selected && x > 350} />)
                : <IBeam />}
            </div>
          ))}
          {layers.slice(10).map((layer) => <LayerTrack key={layer.nr} layer={layer} />)}
        </div>
        {/* everything after the end of the composition is shaded */}
        <div className="absolute top-[83px] right-0 bottom-0 w-[204px] bg-black/5" />
        <svg viewBox="0 0 13 15" className="absolute top-[45px] left-0 h-[15px] w-[13px]"><path d="M0 0h13v6l-6.500 9L0 6z" fill="#3b94f2" /></svg>
        <div className="absolute top-[59px] left-[6px] h-[415px] w-[1.500px] bg-[#3b94f2]" />
      </div>
      <div className="flex flex-1 flex-col items-center pt-[64px] pr-px">
        <Ico className="h-[15px] w-[13px]" box="0 0 13 15"><path d="M0 0h13v10l-6.500 5L0 10z" fill="#b8b8b8" stroke="none" /></Ico>
        <Ico className="mt-[12px] h-[13px] w-[15px]" box="0 0 15 13"><path d="M0 5l7-5v3h8v7H7l-4-2z" fill="#b8b8b8" stroke="none" /><circle cx="7" cy="8" r="3.500" fill="#222" stroke="#b8b8b8" /></Ico>
        <div className="mt-[4px] h-[256px] w-[9px] rounded-full bg-[#4a4a4a]" />
      </div>
    </div>
    <div className="flex flex-1 items-center border-t border-[#0c0c0c]">
      <div className="ml-[4px] flex size-[15px] items-center justify-center rounded-[3px] bg-[#484848]"><Ico className="size-[12px]" box="0 0 12 12"><path d="M1 8V1h7M3 10V3h7M5 5h6v6H5zM7 8h2" /></Ico></div>
      <Ico className="ml-[7px] size-[12px]" box="0 0 12 12"><circle cx="4.500" cy="4.500" r="3.800" /><rect x="5" y="5" width="6.500" height="6.500" /></Ico>
      <Ico className="ml-[8px] size-[12px]" box="0 0 12 12"><path d="M4 0C2 0 2.500 2 2.500 4S1.500 6 0 6c1.500 0 2.500 0 2.500 2S2 12 4 12M8 0c2 0 1.500 2 1.500 4S10.500 6 12 6c-1.500 0-2.500 0-2.500 2S10 12 8 12" strokeWidth="1.600" /></Ico>
      <Ico className="ml-[8px] h-[11px] w-[14px]" box="0 0 14 11"><circle cx="5" cy="4" r="4" fill="currentColor" stroke="none" /><path d="M0 8.500h10V2M10 2l3-1.500M12 2v4M1 10.500h10" /></Ico>
      <span className="ml-[29px] w-[164px] text-[11.300px] whitespace-nowrap">Zeit für das Frame-Rendering:</span>
      <span className="text-[11.300px] text-[#3ed3a2]">10ms</span>
      <span className="mb-[2px] ml-auto w-[310px] text-[11.300px]">Schalter/Modi</span>
      <Ico className="h-[5px] w-[10px]" box="0 0 10 5"><path d="M0 5l2.500-3L4 3l2-3 4 5z" fill="currentColor" stroke="none" /></Ico>
      <div className="ml-[8px] h-[2px] w-[16px] bg-[#555]" />
      <div className="ml-[3px] size-[11px] rounded-full border-2 border-[#b8b8b8]" />
      <div className="ml-[4px] h-[2px] w-[28px] bg-[#555]" />
      <Ico className="ml-[5px] h-[8px] w-[17px]" box="0 0 17 8"><path d="M0 8l5-7 1 1-3 6zM4 8l6-8 7 8z" fill="currentColor" stroke="none" /></Ico>
      <div className="mr-[193px] ml-[10px] h-[10px] w-[401px] rounded-full bg-[#484848]" />
    </div>
  </div>
);

/* ---------- Right column ---------- */

const PanelTitle = ({ children, className = '' }: { children: ReactNode; className?: string }) => (
  <div className={`flex shrink-0 items-center justify-between pr-[10px] pl-[13px] text-[#e0e0e0] ${className}`}>
    {children}
    <Menu className="text-[#9a9a9a]" />
  </div>
);

const transforms: { name: string; animated?: boolean; values: [string, string][] }[] = [
  { name: 'Ankerpunkt', values: [['1080', ''], ['1920', '']] },
  { name: 'Position', animated: true, values: [['1080', ''], ['1920', '']] },
  { name: 'Skalierung', animated: true, values: [['100', '%'], ['100', '%']] },
  { name: 'Drehung', animated: true, values: [] },
  { name: 'Deckkraft', values: [['100', '%']] },
];

interface Brush {
  size: number;
  r: number;
  kind: 'hard' | 'soft' | 'flat';
  tilt?: number;
}

const brushes: Brush[] = [
  { size: 1, r: 0, kind: 'hard' }, { size: 3, r: 1, kind: 'hard' }, { size: 5, r: 3, kind: 'hard' }, { size: 9, r: 5.2, kind: 'hard' },
  { size: 13, r: 7, kind: 'hard' }, { size: 19, r: 7, kind: 'hard' }, { size: 5, r: 1.5, kind: 'hard' }, { size: 9, r: 3.5, kind: 'soft' },
  { size: 13, r: 5, kind: 'soft' }, { size: 17, r: 5, kind: 'soft' }, { size: 21, r: 5.5, kind: 'soft' }, { size: 27, r: 5, kind: 'soft' },
  { size: 35, r: 5, kind: 'soft' }, { size: 45, r: 5, kind: 'soft' }, { size: 65, r: 5, kind: 'soft' }, { size: 100, r: 5, kind: 'soft' },
  { size: 200, r: 5.5, kind: 'soft' }, { size: 300, r: 5.5, kind: 'soft' }, { size: 11, r: 4, kind: 'flat', tilt: -20 }, { size: 11, r: 4, kind: 'flat', tilt: -45 },
  { size: 11, r: 4, kind: 'flat', tilt: 90 }, { size: 45, r: 5, kind: 'flat', tilt: -20 }, { size: 45, r: 5, kind: 'flat', tilt: -45 }, { size: 45, r: 5, kind: 'flat', tilt: 90 },
];

const BrushCell = ({ brush }: { brush: Brush }) => (
  <div className={`flex h-[34.200px] w-[34.200px] flex-col items-center border-r border-b border-[#101010] ${brush.size === 21 ? 'bg-[#484848] text-[#6c6c6c]' : ''}`}>
    <svg viewBox="0 0 16 16" className="mt-[3px] size-[16px] shrink-0">
      {brush.kind === 'hard' && <circle cx="8" cy="8" r={brush.r} fill="#6e6e6e" />}
      {brush.kind === 'soft' && <circle cx="8" cy="8" r={brush.r} fill="url(#softBrush)" />}
      {brush.kind === 'flat' && <ellipse cx="8" cy="8" rx={brush.r} ry="1.500" fill="url(#softBrush)" transform={`rotate(${brush.tilt} 8 8)`} />}
    </svg>
    <span className="text-[10px] leading-[15px]">{brush.size}</span>
  </div>
);

const brushValues: [string, string, string][] = [
  ['Durchmesser:', '21 Px', 'h-[21px]'],
  ['Winkel:', '0 °', 'h-[21px]'],
  ['Rundheit:', '100 %', 'h-[21px]'],
  ['Kantenschärfe:', '0 %', 'h-[20px]'],
];

const BrushSelect = ({ label, value, className }: { label: string; value: string; className: string }) => (
  <div className={`flex shrink-0 items-center ${className}`}>
    <span className="w-[95px] text-right">{label}</span>
    <div className="ml-[3px] flex h-[21px] w-[113px] items-center justify-between rounded-[4px] bg-[#2e2e2e] pr-[9px] pl-[9px]">{value}<Chevron /></div>
  </div>
);

const alignIcons = [
  'M0 0h1v16H0zM2 2h7v5H2zM2 9h13v5H2z',
  'M7.500 0h1v16h-1zM4 2h8v5H4zM1.500 9h13v5h-13z',
  'M15 0h1v16h-1zM7 2h7v5H7zM1 9h13v5H1z',
  'M0 0h16v1H0zM2 2h5v13H2zM9 2h5v7H9z',
  'M0 7.500h16v1H0zM2.500 1.500h4.500v13H2.500zM9 4h5v8H9z',
  'M0 15h16v1H0zM2 2h5v12H2zM9 7h5v7H9z',
];

const RightColumn = () => (
  <div className="flex w-[334px] shrink-0 flex-col bg-black">
    <div className="flex h-[58px] shrink-0 flex-col bg-[#1d1d1d]">
      <div className="flex h-[26px] items-center pl-[13px] text-[#e0e0e0]">Vorschau <Menu className="ml-[12px] text-[#9a9a9a]" /></div>
      <div className="flex h-[28px] items-center gap-[11.500px] pl-[51px] text-[#b4b4b4]">
        <Ico className="h-[11px] w-[14px]" box="0 0 14 11"><path d="M0 0h1.700v11H0zM13 0v11L3 5.500z" fill="currentColor" stroke="none" /></Ico>
        <Ico className="h-[11px] w-[14px]" box="0 0 14 11"><path d="M12 0h1.500v11H12zM10.500 0v11L0 5.500z" fill="currentColor" stroke="none" /></Ico>
        <Ico className="h-[11px] w-[14px]" box="0 0 14 11"><path d="M2 0v11l10.500-5.500z" fill="currentColor" stroke="none" /></Ico>
        <Ico className="h-[11px] w-[14px]" box="0 0 14 11"><path d="M.5 0H2v11H.5zM4 0v11l10-5.500z" fill="currentColor" stroke="none" /></Ico>
        <Ico className="h-[11px] w-[14px]" box="0 0 14 11"><path d="M12.300 0H14v11h-1.700zM1 0v11l10-5.500z" fill="currentColor" stroke="none" /></Ico>
      </div>
      <div className="ml-[6px] h-px w-[210px] bg-[#111]" />
    </div>
    <div className="mt-[5px] flex flex-1 overflow-hidden bg-[#1d1d1d]">
      <div className="flex w-[316px] shrink-0 flex-col">
        <PanelTitle className="h-[26px] whitespace-nowrap">Eigenschaften: Komplette map/Langstrasse_step 3.ai</PanelTitle>
        <div className="flex h-[22px] shrink-0 items-center pl-[12px]">
          <span className="w-[149px] text-[10.900px] font-bold text-[#b8b8b8]">Ebenentransformation</span>
          <Blue>Zurück</Blue>
        </div>
        {transforms.map((row) => (
          <div key={row.name} className="flex h-[21.400px] shrink-0 items-center text-[11.300px]">
            <div className="flex w-[64px] shrink-0 items-center pl-[15px]">
              {row.animated ? <KeyNav /> : <div className="pl-[11px]"><Stopwatch /></div>}
            </div>
            <span className="w-[72px] shrink-0">{row.name}</span>
            <div className="w-[23px]">{row.name === 'Skalierung' && <Link className="text-[#3b94f2]" />}</div>
            {row.name === 'Drehung' && <div className="h-[19px] w-[57px] border-b border-[#6c6c6c] pl-[3px]"><Blue>0</Blue>x<Blue>+0</Blue>°</div>}
            {row.values.map(([value, unit], i) => (
              <div key={i} className="mr-[12px] h-[19px] w-[41px] border-b border-[#6c6c6c] pl-[3px] text-[11.600px] whitespace-nowrap"><Blue>{value}</Blue>{unit}</div>
            ))}
          </div>
        ))}
        <PanelTitle className="mt-[15px] h-[31px] border-t border-black">Ausrichten</PanelTitle>
        <div className="flex h-[30px] shrink-0 items-center pl-[7px]">Ebenen ausrichten an:</div>
        <Dropdown className="ml-[4px] h-[25px] w-[118px] pr-[8px] pl-[8px] text-[11.300px]">Komposition</Dropdown>
        <div className="flex h-[44px] shrink-0 items-center gap-[20.600px] pt-px pl-[11px]">
          {alignIcons.map((d) => <Ico key={d} className="size-[16px]"><path d={d} fill="currentColor" stroke="none" /></Ico>)}
        </div>
        <div className="mb-[3px] ml-[6px] h-px w-[208px] shrink-0 bg-[#111]" />
        <div className="flex h-[27px] shrink-0 items-center border-t border-black pt-[3px] pl-[13px]">Audio</div>
        <PanelTitle className="h-[32px] border-t-2 border-black">Effekte und Vorgaben</PanelTitle>
        <div className="ml-[6px] flex h-[20px] w-[306px] shrink-0 items-center rounded-[4px] border border-[#2b2b2b] bg-[#0e0e0e] pl-[7px]"><SearchIcon /></div>
        <div className="mt-[3px] flex h-[29px] shrink-0 items-center justify-end border-t-2 border-r border-black pr-[7px]">
          <Ico className="size-[13px]" box="0 0 13 13"><path d="M0 0h13v13H7.500V6H0zM1 7.500h5V12.500z" fill="currentColor" stroke="none" /></Ico>
        </div>
        <PanelTitle className="h-[30px] border-t-2 border-black">Pinsel</PanelTitle>
        <div className="mt-[9px] ml-[12px] flex h-[107px] w-[286px] shrink-0 flex-wrap content-start border border-[#101010] text-[#808080]">
          <svg className="absolute size-0">
            <defs>
              <radialGradient id="softBrush"><stop offset="0" stopColor="#9a9a9a" /><stop offset="1" stopColor="#9a9a9a" stopOpacity="0" /></radialGradient>
            </defs>
          </svg>
          <div className="flex w-[274px] flex-wrap">
            {brushes.map((brush, i) => <BrushCell key={i} brush={brush} />)}
          </div>
        </div>
        <div className="mt-[6px] flex shrink-0 text-[11.500px] text-[#7e7e7e]">
          <div className="flex w-[145px] flex-col">
            {brushValues.map(([label, value, height]) => (
              <div key={label} className={`flex items-center ${height}`}>
                <span className="w-[95px] text-right">{label}</span>
                <span className="ml-[4px] tracking-[0.200px]">{value}</span>
              </div>
            ))}
            <div className="flex h-[19px] items-center">
              <div className="ml-[25px] flex size-[13px] items-center justify-center rounded-[2px] bg-[#7e7e7e]"><Ico className="size-[10px] text-[#1a1a1a]" box="0 0 10 10"><path d="M1 5l3 3.500L9 1.500" strokeWidth="2" /></Ico></div>
              <span className="w-[57px] text-right">Abstand:</span>
              <span className="ml-[4px] tracking-[0.200px]">25 %</span>
            </div>
          </div>
          <div className="flex flex-col">
            <div className="mt-[6px] -ml-px flex size-[72px] items-center justify-center border border-[#0c0c0c]">
              <svg viewBox="0 0 16 16" className="size-[16px]"><circle cx="8" cy="8" r="8" fill="url(#softBrush)" /></svg>
            </div>
            <div className="mt-[10px] flex items-center gap-[14px] pl-[15px]">
              <Ico className="size-[13px]" box="0 0 13 13"><path d="M0 0h13v13H7.500V6H0zM1 7.500h5V12.500z" fill="currentColor" stroke="none" /></Ico>
              <Trash />
            </div>
          </div>
        </div>
        <div className="mt-[6px] flex h-[22px] shrink-0 items-center pl-[16px] text-[11.500px] text-[#7e7e7e]">
          Pinseleinstellungen <div className="ml-[5px] h-px w-[88px] bg-[#0c0c0c]" />
        </div>
        <div className="flex shrink-0 flex-col text-[11.500px] text-[#7e7e7e]">
          <BrushSelect label="Größe:" value="Zeichenstiftd..." className="mt-[2px]" />
          <div className="flex h-[23px] items-center"><span className="w-[95px] text-right">Mindestgröße:</span><span className="ml-[5px]">1 %</span></div>
          <BrushSelect label="Winkel:" value="Aus" className="" />
          <BrushSelect label="Rundheit:" value="Aus" className="mt-[2.600px]" />
          <BrushSelect label="Deckkraft:" value="Aus" className="mt-[2.600px]" />
          <BrushSelect label="Fluss:" value="Aus" className="mt-[2.600px]" />
        </div>
        <PanelTitle className="mt-[10px] h-[33px] border-t border-black">Malen</PanelTitle>
        <div className="flex h-[52px] shrink-0 pt-px text-[11.500px] text-[#7e7e7e]">
          <div className="flex w-[95px] flex-col items-end pt-[5px] leading-[18px]"><span>Deckkraft: 0 %</span><span>Fluss: 0 %</span></div>
          <div className="ml-[26px] flex w-[18px] flex-col items-center pt-[10px]">
            <svg viewBox="0 0 8 8" className="size-[8px]"><circle cx="4" cy="4" r="3.500" fill="url(#softBrush)" opacity=".5" /></svg>
            <span className="text-[10px] leading-[21px]">21</span>
          </div>
          <div className="relative ml-[30px] h-[44px] w-[48px]">
            <div className="absolute top-[19px] left-[15px] size-[26px] bg-white" />
            <div className="absolute top-[4px] left-0 h-[27px] w-[28px] border border-white bg-[#fe0000] outline outline-black" />
            <Ico className="absolute top-[5px] left-[32px] size-[12px] text-[#505050]" box="0 0 12 12"><path d="M2 3h4c3 0 3 3 3 6M4 .5L1.500 3 4 5.500M6 7l3 3 3-3" strokeWidth="1.500" /></Ico>
            <Ico className="absolute top-[34px] left-[-2px] size-[11px] text-[#505050]" box="0 0 11 11"><path d="M5 4h6v7H5z" fill="currentColor" stroke="none" /><rect x=".7" y=".7" width="6.500" height="7" fill="#1d1d1d" /></Ico>
          </div>
        </div>
        <div className="flex h-[20px] shrink-0 items-center text-[11.500px] text-[#7e7e7e]">
          <span className="w-[61px] text-right">Methode:</span>
          <div className="ml-[4px] flex h-[20px] w-[123px] items-center justify-between rounded-[4px] bg-[#2e2e2e] pr-[9px] pl-[9px]">Normal<Chevron /></div>
          <Ico className="ml-[3px] size-[18px]" box="0 0 18 18"><path d="M1 17l1-4 8-8 3 3-8 8z" /><path d="M10 3l5 5M11 5l3-4c2-2 4.500.5 3 2.500l-4 3z" fill="currentColor" strokeWidth="2" /></Ico>
        </div>
      </div>
      <div className="mt-[4px] ml-[6px] h-[727px] w-[8px] rounded-full bg-[#484848]" />
    </div>
  </div>
);

/* ---------- Dock ---------- */

interface DockApp {
  name: string;
  tile: string;
  art: ReactNode;
  running?: boolean;
  badge?: string;
}

const Art = ({ children }: { children: ReactNode }) => <svg viewBox="0 0 28 28" className="size-[28px] shrink-0">{children}</svg>;

const Letters = ({ children, className }: { children: ReactNode; className: string }) => (
  <span className={`font-['Noto_Sans_CJK_SC',sans-serif] text-[15px] leading-none font-bold ${className}`}>{children}</span>
);

const petals = ['#f7941d', '#f7d21d', '#a6ce39', '#39b36b', '#2fa4dc', '#6a6fd0', '#b65bb0', '#ef4b4b'];

const OfficeTile = ({ letter, dark, light, mid }: { letter: string; dark: string; light: string; mid: string }) => (
  <Art>
    <rect x="9" y="5" width="15" height="18" rx="1.500" fill={light} />
    <path d="M9 11h15v6H9z" fill={mid} />
    <path d="M9 17h15v4.500a1.500 1.500 0 01-1.500 1.500h-12A1.500 1.500 0 019 21.500z" fill={dark} />
    <rect x="3" y="8.500" width="11" height="11" rx="1" fill={dark} />
    <text x="8.500" y="17" textAnchor="middle" fill="#fff" className="font-['Liberation_Sans'] text-[8px] font-bold">{letter}</text>
  </Art>
);

const dockApps: DockApp[] = [
  { name: 'Finder', running: true, tile: 'bg-[#eaf2fb]', art: <Art><path d="M0 0h16c-3 6-3.500 10-3.500 15H16c0 5 1 9 2 13H0z" fill="#1f9bf5" /><path d="M8 8v3M21 8v3M5 19c5 4.500 13 4.500 18 0" stroke="#1a2a44" strokeWidth="1.500" fill="none" strokeLinecap="round" /></Art> },
  {
    name: 'Launchpad', tile: 'bg-[#b9b7b4]', art: (
      <Art>
        {['#f25a3c', '#f7a23b', '#8fcf3c', '#e43e4e', '#d9d9d9', '#e0513e', '#a05bd0', '#3a8ef0', '#3fc0e0'].map((color, i) => (
          <rect key={i} x={4.5 + (i % 3) * 7} y={4.5 + Math.floor(i / 3) * 7} width="5.200" height="5.200" rx="1" fill={color} />
        ))}
      </Art>
    ),
  },
  { name: 'Nachrichten', tile: 'bg-linear-to-b from-[#5ff777] to-[#0bbd29]', art: <Art><ellipse cx="14" cy="13" rx="10" ry="8.500" fill="#f6fff6" /><path d="M8 18l-1.500 5 6-2.500z" fill="#f6fff6" /></Art> },
  { name: 'Safari', running: true, tile: 'bg-[#e6e8ea]', art: <Art><circle cx="14" cy="14" r="12.300" fill="#1c8df0" /><circle cx="14" cy="14" r="11" fill="none" stroke="#bfe0ff" strokeWidth="1.500" strokeDasharray=".6 1.500" /><path d="M22.500 5.500L15.500 15.500 12.500 12.500z" fill="#f23c32" /><path d="M5.500 22.500l10-7-3-3z" fill="#fff" /></Art> },
  { name: 'Outlook', tile: 'bg-white', art: <Art><path d="M10 5h12v16H10z" fill="#1490df" /><path d="M16 5h6v8h-6z" fill="#50d9ff" /><path d="M8 14l8 5 9-5v9H8z" fill="#28a8ea" /><rect x="3" y="9" width="11" height="11" rx="1" fill="#0f64b5" /><circle cx="8.500" cy="14.500" r="3" fill="none" stroke="#fff" strokeWidth="1.500" /></Art> },
  { name: 'Teams', tile: 'bg-white', art: <Art><circle cx="15" cy="7" r="3.300" fill="#7b83eb" /><circle cx="22" cy="8.500" r="2.300" fill="#5059c9" /><path d="M9 11h12v7a6 6 0 01-12 4z" fill="#7b83eb" /><path d="M21 12h5v6a3.500 3.500 0 01-5 3z" fill="#5059c9" /><rect x="3" y="9" width="11" height="11" rx="1" fill="#4b53bc" /><path d="M5.500 12h6M8.500 12v6" stroke="#fff" strokeWidth="1.700" /></Art> },
  { name: 'Mail', tile: 'bg-linear-to-b from-[#1f78f2] to-[#1fb6fb]', art: <Art><rect x="4" y="7.500" width="20" height="13.500" rx="1.500" fill="#f3f3f3" /><path d="M4.500 8.500L14 16l9.500-7.500M5 20l7-6M23 20l-7-6" stroke="#8c97a5" fill="none" /></Art> },
  { name: 'Karten', tile: 'bg-[#e9efe6]', art: <Art><path d="M0 0h11L0 12z" fill="#52c35a" /><path d="M14 0h14v14z" fill="#7ad46e" /><path d="M0 28V16l12 12z" fill="#f59ac0" /><path d="M9 0l19 24" stroke="#fff" strokeWidth="5" /><path d="M12 0l16 20" stroke="#f7d34c" strokeWidth="2.500" /><circle cx="12" cy="18" r="8" fill="#1c7cf0" stroke="#fff" strokeWidth="1.200" /><path d="M12 12.500l4 9.500-4-2-4 2z" fill="#fff" /></Art> },
  { name: 'Fotos', tile: 'bg-white', art: <Art>{petals.map((color, i) => <ellipse key={color} cx="14" cy="8.200" rx="3.600" ry="5.200" fill={color} opacity=".85" transform={`rotate(${i * 45} 14 14)`} />)}</Art> },
  { name: 'FaceTime', tile: 'bg-linear-to-b from-[#5ff777] to-[#0bbd29]', art: <Art><rect x="4" y="8.500" width="13" height="11.500" rx="3" fill="#fff" /><path d="M18 13l5.500-4v10.500L18 15.500z" fill="#fff" /></Art> },
  {
    name: 'Kalender', tile: 'bg-white', art: (
      <div className="flex h-full w-full flex-col items-center font-['Inter',sans-serif]">
        <div className="flex h-[9px] w-full items-center justify-center bg-[#f24a42] text-[6px] leading-none font-semibold text-white">DEZ</div>
        <span className="text-[16px] leading-[19px] tracking-tight text-[#222]">10</span>
      </div>
    ),
  },
  { name: 'Kontakte', tile: 'bg-[#a98350]', art: <Art><path d="M25.500 4h2.500v5h-2.500z" fill="#b8b8b8" /><path d="M25.500 11h2.500v5h-2.500z" fill="#37b0e8" /><path d="M25.500 18h2.500v5h-2.500z" fill="#f08a28" /><circle cx="13" cy="14" r="8" fill="none" stroke="#8a693e" strokeWidth="1.200" /><circle cx="13" cy="12" r="3" fill="#8a693e" /><path d="M7.500 19c1-4 10-4 11 0z" fill="#8a693e" /></Art> },
  { name: 'Erinnerungen', tile: 'bg-white', art: <Art><circle cx="6" cy="7" r="2" fill="#2f7cf6" /><circle cx="6" cy="14" r="2" fill="#f4584c" /><circle cx="6" cy="21" r="2" fill="#f7923a" /><path d="M10.500 7H24M10.500 14H24M10.500 21H24" stroke="#c9c9c9" /></Art> },
  { name: 'Notizen', tile: 'bg-[#f3f1ea]', art: <Art><path d="M0 0h28v7H0z" fill="#fcc91f" /><path d="M0 8.500h28" stroke="#bbb" strokeDasharray="1 1" /><path d="M3 14h22M3 20h22" stroke="#d2d0c8" /></Art> },
  { name: 'Freeform', tile: 'bg-white', art: <Art><circle cx="18" cy="10" r="7" fill="#f5523c" /><path d="M3 5h10l3 10-4 5H3z" fill="#5ac8f5" opacity=".8" /><path d="M3 22c4-3 6-13 8-11s-3 11 0 9 4-9 6-8-1 8 1 8 3-4 6-7" stroke="#0d2b55" strokeWidth="1.600" fill="none" /></Art> },
  { name: 'TV', tile: 'bg-[#10151a]', art: <span className="flex items-center font-['Inter',sans-serif] text-[11px] leading-none font-medium text-white"><FaApple className="size-[10px]" />tv</span> },
  { name: 'Musik', tile: 'bg-linear-to-b from-[#fb5c74] to-[#fa233b]', art: <FaMusic className="size-[15px] text-white" /> },
  { name: 'Podcasts', tile: 'bg-linear-to-b from-[#d56efc] to-[#832bc1]', art: <FaPodcast className="size-[19px] text-white" /> },
  { name: 'Keynote', tile: 'bg-white', art: <Art><path d="M5 5h18l1 8H4z" fill="#1d8cf2" /><circle cx="11" cy="8.500" r="2" fill="#f7c52b" /><path d="M15 6.500h4v4h-4z" fill="#35c05a" /><path d="M14 13v9.500M9 23h10" stroke="#444" strokeWidth="1.700" /></Art> },
  { name: 'Numbers', tile: 'bg-white', art: <Art><path d="M5 16h4v8H5z" fill="#f4584c" /><path d="M10 12h4v12h-4z" fill="#f7a52b" /><path d="M15 5h4v19h-4z" fill="#35c05a" /><path d="M20 9h4v15h-4z" fill="#2f9cf6" /></Art> },
  { name: 'Acrobat', tile: 'bg-[#b30b00]', art: <Art><path d="M6 20c2 1 7-5 8.500-12 .3-3-2.500-3-2 0 .8 4 5 9 9 9.500 3 .2 2.800-2.600-.5-2.500-5 0-11 2-14.500 4-1 .6-1 1-.5 1z" stroke="#fff" strokeWidth="1.500" fill="none" /></Art> },
  { name: 'Illustrator', running: true, tile: 'bg-[#330000]', art: <Letters className="text-[#ff9a00]">Ai</Letters> },
  { name: 'InDesign', tile: 'bg-[#49021f]', art: <Letters className="text-[#ff3366]">Id</Letters> },
  { name: 'Photoshop', tile: 'bg-[#001e36]', art: <Letters className="text-[#31a8ff]">Ps</Letters> },
  { name: 'XD', tile: 'bg-[#470137]', art: <Letters className="text-[#ff61f6]">Xd</Letters> },
  { name: 'Substance', tile: 'bg-[#1a3600]', art: <Letters className="text-[#a8f04c]">Pt</Letters> },
  { name: 'Blender', tile: '', art: <div className="relative shrink-0"><SiBlender className="size-[30px] text-[#ea7600]" /><div className="absolute top-[11.500px] left-[15px] size-[9px] rounded-full border-2 border-white bg-[#1f5fa0]" /></div> },
  { name: 'Maxon', tile: 'bg-[#100c0c]', art: <Art><path d="M8 10l6 4 6-4v9l-6 4-6-4zM8 19V10M8 12l6 4 6-4M11 17v4M17 17v4" stroke="#e8392e" strokeWidth="1.300" fill="none" /></Art> },
  { name: 'Cinema 4D', tile: '', art: <svg viewBox="0 0 30 30" className="size-[32px] shrink-0"><circle cx="15" cy="15" r="14.500" fill="#c8cfe6" /><ellipse cx="16" cy="15" rx="11" ry="12" fill="#0d1f56" /><path d="M6 20C2 11 11 2 20 5c5 3 2 7-3 7s-8 2-8 9z" fill="#dfe5f5" /><circle cx="20" cy="11" r="5.500" fill="#2a3f8a" /></svg> },
  { name: 'Code', tile: 'bg-white', art: <Art><path d="M20 4L4.500 17.500l2 2L20 9.500zM20 24L4.500 10.500l2-2L20 18.500z" fill="#0a74c4" /><path d="M20 4l4 2v16l-4 2z" fill="#1f9cf0" /></Art> },
  {
    name: 'Figma', tile: 'bg-[#1e1e1e]', art: (
      <Art><path d="M14 4h-3a3.300 3.300 0 000 6.600h3z" fill="#f24e1e" /><path d="M14 4h3a3.300 3.300 0 010 6.600h-3z" fill="#ff7262" /><path d="M14 10.600h-3a3.300 3.300 0 000 6.600h3z" fill="#a259ff" /><circle cx="17.300" cy="13.900" r="3.300" fill="#1abcfe" /><path d="M14 17.200h-3a3.300 3.300 0 103 3.300z" fill="#0acf83" /></Art>
    ),
  },
  { name: 'Optics', tile: '', art: <svg viewBox="0 0 34 34" className="size-[34px] shrink-0"><path d="M0 0h34v34H0z" fill="#97a07a" stroke="#1c1c14" strokeWidth="1.500" /><path d="M17 0v34" stroke="#141410" strokeWidth="1.500" /><path d="M5 5h5l3 5M29 5h-5l-3 5M5 29h5l3-5M29 29h-5l-3-5M3 17h6M25 17h6" stroke="#141410" strokeWidth="2" fill="none" /><circle cx="17" cy="17" r="6.500" fill="#f0f0e4" stroke="#141410" strokeWidth="3.500" /><circle cx="17" cy="17" r="2.500" fill="#141410" /></svg> },
  { name: 'Z', tile: '', art: <div className="flex h-[36px] w-[35px] shrink-0 items-center justify-center bg-[#1b50b8] font-['Inter',sans-serif] text-[25px] leading-none font-bold text-white">Z</div> },
  { name: 'Word', tile: 'bg-white', art: <OfficeTile letter="W" dark="#185abd" mid="#2b7cd3" light="#41a5ee" /> },
  { name: 'Excel', tile: 'bg-white', art: <OfficeTile letter="X" dark="#107c41" mid="#21a366" light="#33c481" /> },
  { name: 'OneNote', tile: 'bg-white', art: <OfficeTile letter="N" dark="#7719aa" mid="#ae4bd5" light="#ca64ea" /> },
  { name: 'Pages', tile: 'bg-[#fdf9f0]', art: <Art><path d="M21 3l2 1.500L13 22l-3 2.500.5-4z" fill="#e3862e" stroke="#6b4a2a" strokeWidth=".8" /><path d="M3 9c0-3 1-4 2.500-4L4.800 7l1.400 2zM7.500 9c0-3 1-4 2.500-4L9.300 7l1.400 2z" fill="#f7931e" /></Art> },
  { name: 'App Store', tile: 'bg-linear-to-b from-[#1ac8fb] to-[#1a72f2]', art: <Art><path d="M16 5L8 20.500M12 5l8.500 15.500M4.500 17H18M21 17h2.500" stroke="#fff" strokeWidth="2.300" strokeLinecap="round" /></Art> },
  { name: 'Einstellungen', badge: '1', tile: 'bg-[#9a9b9e]', art: <Art><circle cx="14" cy="14" r="10.500" fill="#77787b" stroke="#2c2c2e" strokeWidth="2.500" strokeDasharray="1.300 .8" /><circle cx="14" cy="14" r="7.500" fill="none" stroke="#222" strokeWidth="1.800" /><path d="M14 14L9 8M14 14h8M14 14l-5 6.500" stroke="#222" strokeWidth="1.800" /></Art> },
  { name: 'Discord', tile: 'bg-[#5865f2]', art: <FaDiscord className="size-[20px] text-white" /> },
  { name: 'WhatsApp', tile: 'bg-linear-to-b from-[#5cf777] to-[#0dc143]', art: <FaWhatsapp className="size-[22px] text-white" /> },
  { name: 'Spotify', running: true, tile: '', art: <div className="shrink-0 rounded-full bg-black"><FaSpotify className="size-[29px] text-[#1ed760]" /></div> },
  { name: 'Zotero', tile: 'bg-[#f4f4f4]', art: <span className="border-r-2 border-[#f7c52b] pr-1 font-['Inter',sans-serif] text-[22px] leading-none font-extrabold text-[#d81f26]">Z</span> },
];

const DockIcon = ({ app }: { app: DockApp }) => (
  <div className="relative flex w-[37.960px] shrink-0 flex-col items-center">
    <div className={`flex h-[29px] w-[28px] items-center justify-center rounded-[6.500px] ${app.tile} ${app.tile ? 'overflow-hidden' : ''}`}>{app.art}</div>
    {app.badge && <div className="absolute -top-[4px] right-0 flex size-[13px] items-center justify-center rounded-full bg-[#f5392f] font-['Inter',sans-serif] text-[9px] text-white">{app.badge}</div>}
    {app.running && <div className="mt-[4px] size-[4px] rounded-full bg-[#e4dcbf]" />}
  </div>
);

const Dock = () => (
  <div className="mt-[4px] mr-[28px] ml-[28px] flex h-[46px] rounded-[14px] border border-[#7a7353]/60 bg-linear-to-r from-[#54503d] via-[#5d4f24] to-[#554e2b] pt-[6px] pl-[2px]">
    {dockApps.map((app) => <DockIcon key={app.name} app={app} />)}
    <div className="mx-[8px] h-[33px] w-px shrink-0 bg-[#8a8058]" />
    <DockIcon app={{ name: 'After Effects', running: true, tile: 'bg-[#00005b]', art: <Letters className="text-[#9999ff]">Ae</Letters> }} />
    <DockIcon app={{ name: 'QuickTime', tile: 'bg-[#2b2e36]', art: <Art><circle cx="14" cy="14" r="11.500" fill="#c9cbd2" /><circle cx="14" cy="14" r="7.500" fill="#1f6fe0" /><circle cx="14" cy="14" r="5" fill="#52c4fa" /><path d="M17 17l7 7" stroke="#e6e8ec" strokeWidth="4" /></Art> }} />
    <DockIcon
      app={{
        name: 'Chrome',
        tile: 'bg-white',
        art: (
          <Art><circle cx="14" cy="14" r="11" fill="#ea4335" /><path d="M14 14L4.500 8.500A11 11 0 0012.500 25l6-8z" fill="#34a853" /><path d="M14 14l-1.500 11A11 11 0 0024 9.500H14z" fill="#fbbc05" /><circle cx="14" cy="14" r="5.500" fill="#fff" /><circle cx="14" cy="14" r="4.300" fill="#4285f4" /></Art>
        ),
      }}
    />
    <div className="mr-[10px] ml-[9px] h-[33px] w-px shrink-0 bg-[#8a8058]" />
    <div className="mt-[4px] flex h-[22px] w-[33px] shrink-0 items-end bg-[#56575a]">
      <div className="ml-[21px] flex size-[12px] shrink-0 translate-y-[3px] items-center justify-center rounded-[2px] bg-[#330000] font-['Liberation_Sans'] text-[7px] leading-none font-bold text-[#ff9a00]">Ai</div>
    </div>
    <svg viewBox="0 0 26 34" className="-mt-[3px] ml-[10px] h-[34px] w-[26px] shrink-0"><path d="M1 5h24l-3 27c-3 2.500-15 2.500-18 0z" fill="#85888a" opacity=".9" /><path d="M6 8l2 22M11 8l1 23M16 8l-1 23M21 8l-2 22" stroke="#b9bcbe" strokeWidth=".8" /><path d="M2 5l4-4 4 3 4-3 5 2 4 2-3 3H5z" fill="#ececec" /><path d="M9 4l3 2M16 3l2 3" stroke="#5b8ab8" /></svg>
  </div>
);

const Wallpaper = () => (
  <svg className="absolute inset-x-0 bottom-0 h-[75px] w-full">
    <filter id="grass" colorInterpolationFilters="sRGB"><feTurbulence type="fractalNoise" baseFrequency="0.25 0.4" numOctaves="2" seed="4" /><feColorMatrix values="0.32 0 0 0 0.18  0.3 0 0 0 0.16  0.12 0.12 0 0 0.07  0 0 0 0 1" /></filter>
    <rect width="100%" height="100%" filter="url(#grass)" />
  </svg>
);

const App = () => (
  <div className="relative flex h-[1200px] w-[1920px] flex-col overflow-hidden bg-[#4a4531]">
    <Wallpaper />
    <div className="relative flex flex-col">
      <MenuBar />
      <div className="flex flex-col bg-linear-to-r from-[#a9bbe0] via-[#82aaf0] to-[#93bcf5] pt-[7px]">
        <BrowserStrip />
      </div>
      <div className="relative -mt-[3px] flex h-[1081px] flex-col overflow-hidden rounded-[10px] border border-[#4d4d4d] bg-black font-['Noto_Sans_CJK_SC',sans-serif] text-[11.100px] text-[#b6b6b6]">
        <div className="flex h-[19px] shrink-0 items-center bg-[#343434]">
          <div className="flex w-[100px] gap-[6px] pl-[4px]">
            <div className="flex size-[10px] items-center justify-center rounded-full bg-[#fe5f57]"><div className="size-[3px] rounded-full bg-[#8c1a10]" /></div>
            <div className="size-[10px] rounded-full bg-[#febc2e]" />
            <div className="size-[10px] rounded-full bg-[#28c840]" />
          </div>
          <span className="flex-1 pr-[100px] text-center font-['Inter',sans-serif] text-[11.860px] leading-[19px]">Adobe After Effects 2025 - /Volumes/Externe HD/14 ... LAY 3/Finales Projekt/After Effects Daten/Langstrasse_zoom in map_neu.aep *</span>
        </div>
        <ToolBar />
        <div className="flex min-h-0 flex-1 pt-[2px]">
          <div className="flex w-[1583px] shrink-0 flex-col">
            <div className="flex h-[516px] shrink-0 gap-[5px] pl-px">
              <ProjectPanel />
              <CompositionPanel />
            </div>
            <div className="mt-[4px] pl-px"><TimelinePanel /></div>
          </div>
          <RightColumn />
        </div>
      </div>
      <Dock />
    </div>
  </div>
);

export default App;
